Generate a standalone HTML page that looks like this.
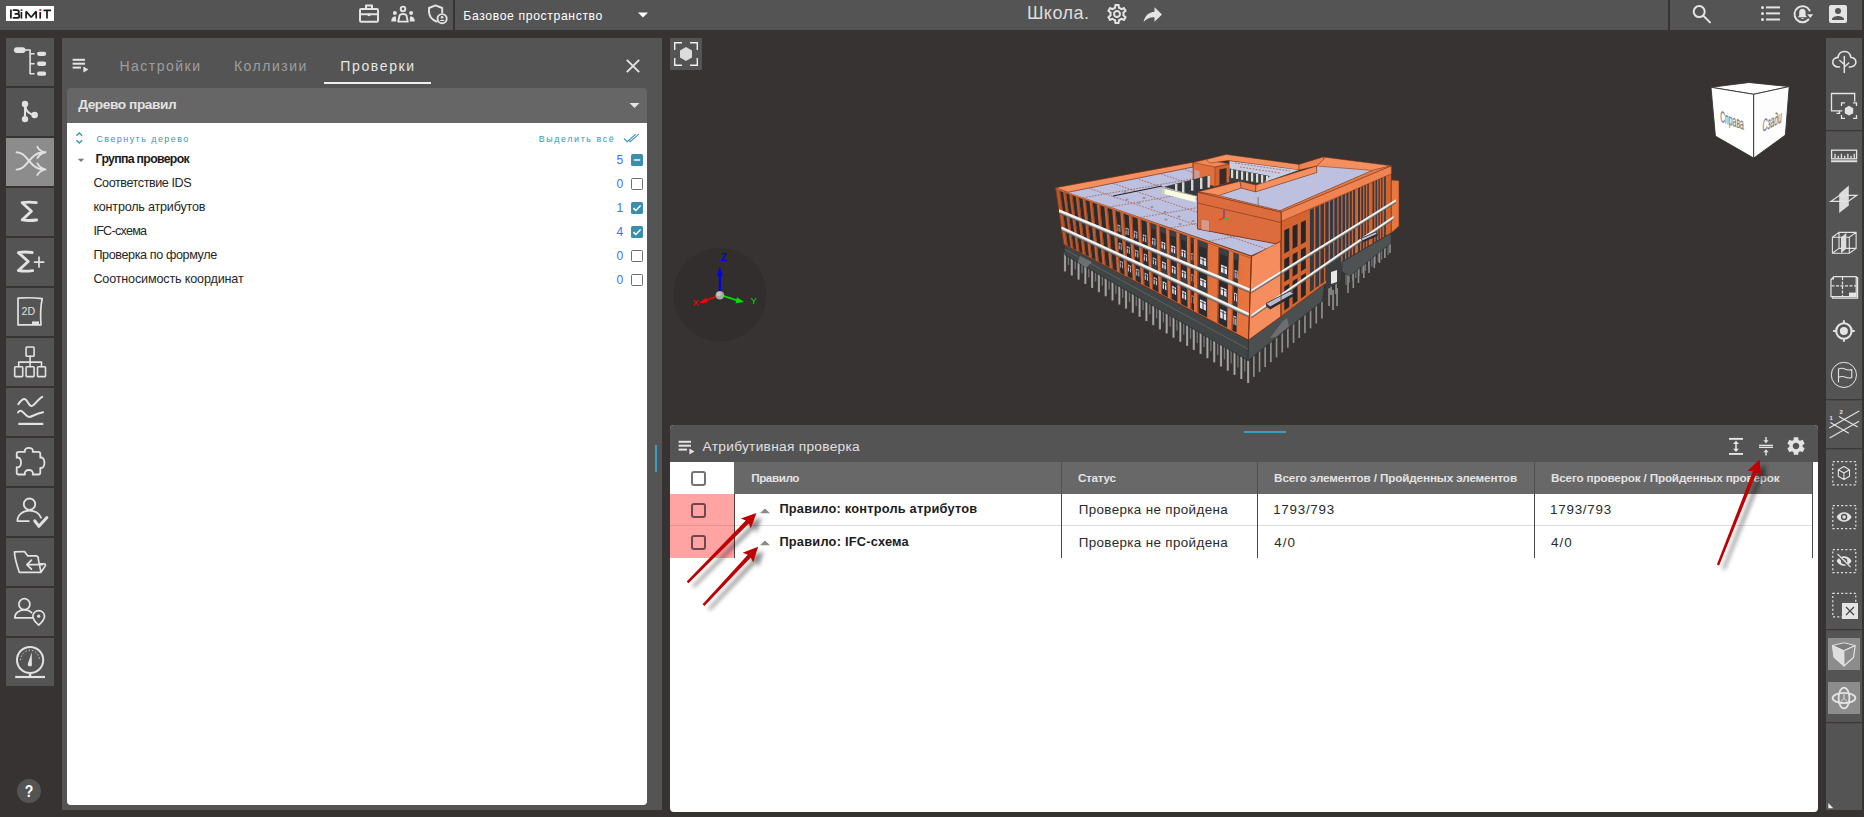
<!DOCTYPE html>
<html lang="ru">
<head>
<meta charset="utf-8">
<title>BIMIT</title>
<style>
*{box-sizing:border-box;margin:0;padding:0}
html,body{width:1864px;height:817px;overflow:hidden;background:#373332;font-family:"Liberation Sans",sans-serif;}
body{position:relative}
.abs{position:absolute}
.t{position:absolute;white-space:nowrap;line-height:1}
#topbar{left:0;top:0;width:1862px;height:30px;background:#545454}
.tdiv{position:absolute;top:0;width:2px;height:30px;background:#373332}
.sb{position:absolute;left:6px;width:48px;height:48px;background:#545454}
.sb.sel{background:#8c8c8c}
.sb svg{position:absolute;left:0;top:0}
#lpanel{left:62px;top:38px;width:600px;height:772px;background:#545454}
#sect{left:67px;top:88px;width:580px;height:35px;background:#666;border-radius:4px 4px 0 0}
#tree{left:67px;top:123px;width:580px;height:682px;background:#fff;border-radius:0 0 4px 4px}
#bpanel{left:670px;top:425px;width:1148px;height:387px;background:#fff;border-radius:4px}
#bhead{left:670px;top:425px;width:1148px;height:37px;background:#545454;border-radius:4px 4px 0 0}
#thead{left:734px;top:462px;width:1078px;height:32px;background:#686868}
#rbar{left:1826px;top:38px;width:36px;height:772px;background:#545454}
</style>
</head>
<body>
<!-- VIEWPORT -->
<svg class="abs" style="left:670px;top:38px" width="1156" height="387" viewBox="670 38 1156 387">
<circle cx="719.8" cy="294.6" r="46.5" fill="#322e2d"/>
<rect x="1063.9" y="252.0" width="2.2" height="19.5" fill="#8d8d8d"/><rect x="1064.7" y="252.0" width="0.7" height="19.0" fill="#b5b5b5"/>
<rect x="1070.7" y="255.9" width="2.2" height="19.7" fill="#8d8d8d"/><rect x="1071.5" y="255.9" width="0.7" height="19.2" fill="#b5b5b5"/>
<rect x="1077.5" y="259.8" width="2.2" height="19.9" fill="#8d8d8d"/><rect x="1078.3" y="259.8" width="0.7" height="19.4" fill="#b5b5b5"/>
<rect x="1084.2" y="263.7" width="2.2" height="20.2" fill="#8d8d8d"/><rect x="1085.0" y="263.7" width="0.7" height="19.7" fill="#b5b5b5"/>
<rect x="1091.0" y="267.6" width="2.2" height="20.4" fill="#8d8d8d"/><rect x="1091.8" y="267.6" width="0.7" height="19.9" fill="#b5b5b5"/>
<rect x="1097.8" y="271.6" width="2.2" height="20.6" fill="#8d8d8d"/><rect x="1098.6" y="271.6" width="0.7" height="20.1" fill="#b5b5b5"/>
<rect x="1104.6" y="275.5" width="2.2" height="20.8" fill="#8d8d8d"/><rect x="1105.4" y="275.5" width="0.7" height="20.3" fill="#b5b5b5"/>
<rect x="1111.4" y="279.4" width="2.2" height="21.1" fill="#8d8d8d"/><rect x="1112.2" y="279.4" width="0.7" height="20.6" fill="#b5b5b5"/>
<rect x="1118.2" y="283.3" width="2.2" height="21.3" fill="#8d8d8d"/><rect x="1119.0" y="283.3" width="0.7" height="20.8" fill="#b5b5b5"/>
<rect x="1124.9" y="287.2" width="2.2" height="21.5" fill="#8d8d8d"/><rect x="1125.7" y="287.2" width="0.7" height="21.0" fill="#b5b5b5"/>
<rect x="1131.7" y="291.1" width="2.2" height="21.7" fill="#8d8d8d"/><rect x="1132.5" y="291.1" width="0.7" height="21.2" fill="#b5b5b5"/>
<rect x="1138.5" y="295.0" width="2.2" height="21.9" fill="#8d8d8d"/><rect x="1139.3" y="295.0" width="0.7" height="21.4" fill="#b5b5b5"/>
<rect x="1145.3" y="298.9" width="2.2" height="22.2" fill="#8d8d8d"/><rect x="1146.1" y="298.9" width="0.7" height="21.7" fill="#b5b5b5"/>
<rect x="1152.1" y="302.8" width="2.2" height="22.4" fill="#8d8d8d"/><rect x="1152.9" y="302.8" width="0.7" height="21.9" fill="#b5b5b5"/>
<rect x="1158.8" y="306.8" width="2.2" height="22.6" fill="#8d8d8d"/><rect x="1159.6" y="306.8" width="0.7" height="22.1" fill="#b5b5b5"/>
<rect x="1165.6" y="310.7" width="2.2" height="22.8" fill="#8d8d8d"/><rect x="1166.4" y="310.7" width="0.7" height="22.3" fill="#b5b5b5"/>
<rect x="1172.4" y="314.6" width="2.2" height="23.1" fill="#8d8d8d"/><rect x="1173.2" y="314.6" width="0.7" height="22.6" fill="#b5b5b5"/>
<rect x="1179.2" y="318.5" width="2.2" height="23.3" fill="#8d8d8d"/><rect x="1180.0" y="318.5" width="0.7" height="22.8" fill="#b5b5b5"/>
<rect x="1186.0" y="322.4" width="2.2" height="23.5" fill="#8d8d8d"/><rect x="1186.8" y="322.4" width="0.7" height="23.0" fill="#b5b5b5"/>
<rect x="1192.7" y="326.3" width="2.2" height="23.7" fill="#8d8d8d"/><rect x="1193.5" y="326.3" width="0.7" height="23.2" fill="#b5b5b5"/>
<rect x="1199.5" y="330.2" width="2.2" height="23.9" fill="#8d8d8d"/><rect x="1200.3" y="330.2" width="0.7" height="23.4" fill="#b5b5b5"/>
<rect x="1206.3" y="334.1" width="2.2" height="24.2" fill="#8d8d8d"/><rect x="1207.1" y="334.1" width="0.7" height="23.7" fill="#b5b5b5"/>
<rect x="1213.1" y="338.0" width="2.2" height="24.4" fill="#8d8d8d"/><rect x="1213.9" y="338.0" width="0.7" height="23.9" fill="#b5b5b5"/>
<rect x="1219.9" y="342.0" width="2.2" height="24.6" fill="#8d8d8d"/><rect x="1220.7" y="342.0" width="0.7" height="24.1" fill="#b5b5b5"/>
<rect x="1226.7" y="345.9" width="2.2" height="24.8" fill="#8d8d8d"/><rect x="1227.5" y="345.9" width="0.7" height="24.3" fill="#b5b5b5"/>
<rect x="1233.4" y="349.8" width="2.2" height="25.1" fill="#8d8d8d"/><rect x="1234.2" y="349.8" width="0.7" height="24.6" fill="#b5b5b5"/>
<rect x="1240.2" y="353.7" width="2.2" height="25.3" fill="#8d8d8d"/><rect x="1241.0" y="353.7" width="0.7" height="24.8" fill="#b5b5b5"/>
<rect x="1247.0" y="357.6" width="2.2" height="25.5" fill="#8d8d8d"/><rect x="1247.8" y="357.6" width="0.7" height="25.0" fill="#b5b5b5"/>
<rect x="1067.8" y="254.0" width="1.3" height="11.1" fill="#777"/>
<rect x="1074.6" y="257.9" width="1.3" height="11.3" fill="#777"/>
<rect x="1081.4" y="261.8" width="1.3" height="11.5" fill="#777"/>
<rect x="1088.1" y="265.7" width="1.3" height="11.6" fill="#777"/>
<rect x="1094.9" y="269.6" width="1.3" height="11.8" fill="#777"/>
<rect x="1101.7" y="273.5" width="1.3" height="12.0" fill="#777"/>
<rect x="1108.5" y="277.4" width="1.3" height="12.2" fill="#777"/>
<rect x="1115.3" y="281.3" width="1.3" height="12.4" fill="#777"/>
<rect x="1122.0" y="285.2" width="1.3" height="12.6" fill="#777"/>
<rect x="1128.8" y="289.2" width="1.3" height="12.8" fill="#777"/>
<rect x="1135.6" y="293.1" width="1.3" height="12.9" fill="#777"/>
<rect x="1142.4" y="297.0" width="1.3" height="13.1" fill="#777"/>
<rect x="1149.2" y="300.9" width="1.3" height="13.3" fill="#777"/>
<rect x="1156.0" y="304.8" width="1.3" height="13.5" fill="#777"/>
<rect x="1162.7" y="308.7" width="1.3" height="13.7" fill="#777"/>
<rect x="1169.5" y="312.6" width="1.3" height="13.9" fill="#777"/>
<rect x="1176.3" y="316.5" width="1.3" height="14.1" fill="#777"/>
<rect x="1183.1" y="320.4" width="1.3" height="14.2" fill="#777"/>
<rect x="1189.9" y="324.4" width="1.3" height="14.4" fill="#777"/>
<rect x="1196.6" y="328.3" width="1.3" height="14.6" fill="#777"/>
<rect x="1203.4" y="332.2" width="1.3" height="14.8" fill="#777"/>
<rect x="1210.2" y="336.1" width="1.3" height="15.0" fill="#777"/>
<rect x="1217.0" y="340.0" width="1.3" height="15.2" fill="#777"/>
<rect x="1223.8" y="343.9" width="1.3" height="15.4" fill="#777"/>
<rect x="1230.5" y="347.8" width="1.3" height="15.5" fill="#777"/>
<rect x="1237.3" y="351.7" width="1.3" height="15.7" fill="#777"/>
<rect x="1244.1" y="355.6" width="1.3" height="15.9" fill="#777"/>
<rect x="1253.0" y="352.4" width="1.7" height="24.4" fill="#8d8d8d"/>
<rect x="1258.7" y="348.1" width="1.7" height="23.8" fill="#8d8d8d"/>
<rect x="1264.3" y="343.9" width="1.7" height="23.2" fill="#8d8d8d"/>
<rect x="1270.0" y="339.7" width="1.7" height="22.5" fill="#8d8d8d"/>
<rect x="1275.7" y="335.4" width="1.7" height="21.9" fill="#8d8d8d"/>
<rect x="1281.4" y="331.2" width="1.7" height="21.3" fill="#8d8d8d"/>
<rect x="1287.0" y="327.0" width="1.7" height="20.7" fill="#8d8d8d"/>
<rect x="1292.7" y="322.8" width="1.7" height="20.1" fill="#8d8d8d"/>
<rect x="1298.4" y="318.5" width="1.7" height="19.5" fill="#8d8d8d"/>
<rect x="1304.1" y="314.3" width="1.7" height="18.8" fill="#8d8d8d"/>
<rect x="1309.7" y="310.1" width="1.7" height="18.2" fill="#8d8d8d"/>
<rect x="1315.4" y="305.8" width="1.7" height="17.6" fill="#8d8d8d"/>
<rect x="1321.1" y="301.6" width="1.7" height="17.0" fill="#8d8d8d"/>
<rect x="1328.2" y="288.0" width="1.7" height="18" fill="#8d8d8d"/>
<rect x="1332.2" y="290.0" width="1.7" height="20" fill="#8d8d8d"/>
<rect x="1336.2" y="288.0" width="1.7" height="18" fill="#8d8d8d"/>
<rect x="1330.2" y="281.0" width="1.7" height="14" fill="#8d8d8d"/>
<rect x="1335.2" y="280.0" width="1.7" height="14" fill="#8d8d8d"/>
<rect x="1345.4" y="271.0" width="1.3" height="14.0" fill="#707070"/>
<rect x="1348.6" y="268.9" width="1.3" height="13.8" fill="#707070"/>
<rect x="1351.9" y="266.8" width="1.3" height="13.5" fill="#707070"/>
<rect x="1355.1" y="264.8" width="1.3" height="13.3" fill="#707070"/>
<rect x="1358.3" y="262.7" width="1.3" height="13.1" fill="#707070"/>
<rect x="1361.6" y="260.6" width="1.3" height="12.8" fill="#707070"/>
<rect x="1364.8" y="258.5" width="1.3" height="12.6" fill="#707070"/>
<rect x="1368.0" y="256.5" width="1.3" height="12.4" fill="#707070"/>
<rect x="1371.2" y="254.4" width="1.3" height="12.2" fill="#707070"/>
<rect x="1374.5" y="252.3" width="1.3" height="11.9" fill="#707070"/>
<rect x="1377.7" y="250.2" width="1.3" height="11.7" fill="#707070"/>
<rect x="1380.9" y="248.2" width="1.3" height="11.5" fill="#707070"/>
<rect x="1384.2" y="246.1" width="1.3" height="11.2" fill="#707070"/>
<rect x="1387.4" y="244.0" width="1.3" height="11.0" fill="#707070"/>
<rect x="1347.2" y="273.0" width="1.6" height="20.0" fill="#8d8d8d"/>
<rect x="1352.5" y="268.9" width="1.6" height="19.1" fill="#8d8d8d"/>
<rect x="1357.7" y="264.8" width="1.6" height="18.2" fill="#8d8d8d"/>
<rect x="1363.0" y="260.6" width="1.6" height="17.4" fill="#8d8d8d"/>
<rect x="1368.2" y="256.5" width="1.6" height="16.5" fill="#8d8d8d"/>
<rect x="1373.5" y="252.4" width="1.6" height="15.6" fill="#8d8d8d"/>
<rect x="1378.7" y="248.2" width="1.6" height="14.8" fill="#8d8d8d"/>
<rect x="1384.0" y="244.1" width="1.6" height="13.9" fill="#8d8d8d"/>
<rect x="1389.2" y="240.0" width="1.6" height="13.0" fill="#8d8d8d"/>
<polygon points="1063.8,244.4 1248.5,340.0 1248.1,360.6 1065.0,255.0" fill="#424546" stroke="#2c2e2f" stroke-width="0.8" stroke-linejoin="round"/>
<line x1="1064.3" y1="249.2" x2="1248.3" y2="349.3" stroke="#6a6d6e" stroke-width="0.7"/>
<polygon points="1248.5,340.0 1325.0,283.8 1322.5,301.0 1275.0,338.8 1248.1,360.6" fill="#4c4f50" stroke="#2c2e2f" stroke-width="0.8" stroke-linejoin="round"/>
<defs><linearGradient id="gf" gradientUnits="userSpaceOnUse" x1="1055" y1="0" x2="1250" y2="0"><stop offset="0" stop-color="#b8552a"/><stop offset="0.45" stop-color="#d96a3a"/><stop offset="1" stop-color="#e8743f"/></linearGradient></defs>
<polygon points="1055.5,187.7 1251.5,256.5 1248.5,340.0 1063.8,244.4" fill="url(#gf)" stroke="#7a3015" stroke-width="0.8" stroke-linejoin="round"/>
<polygon points="1060.0,190.9 1063.0,192.0 1070.5,247.1 1067.7,245.6" fill="#2a2c2e"/>
<polygon points="1058.9,190.5 1060.0,190.9 1067.7,245.6 1066.7,245.1" fill="#9c4520"/>
<polygon points="1066.1,193.1 1069.2,194.2 1076.4,250.1 1073.5,248.6" fill="#2a2c2e"/>
<polygon points="1065.0,192.7 1066.1,193.1 1073.5,248.6 1072.4,248.1" fill="#9c4520"/>
<polygon points="1072.4,195.3 1075.7,196.5 1082.6,253.3 1079.4,251.7" fill="#2a2c2e"/>
<polygon points="1071.3,194.9 1072.4,195.3 1079.4,251.7 1078.4,251.1" fill="#9c4520"/>
<polygon points="1079.0,197.7 1082.5,198.9 1088.9,256.6 1085.6,254.8" fill="#2a2c2e"/>
<polygon points="1077.9,197.3 1079.0,197.7 1085.6,254.8 1084.6,254.3" fill="#9c4520"/>
<polygon points="1085.8,200.1 1089.5,201.4 1095.6,260.0 1092.0,258.1" fill="#2a2c2e"/>
<polygon points="1084.7,199.7 1085.8,200.1 1092.0,258.1 1091.0,257.6" fill="#9c4520"/>
<polygon points="1092.8,202.6 1096.8,204.0 1102.4,263.5 1098.7,261.6" fill="#2a2c2e"/>
<polygon points="1091.7,202.2 1092.8,202.6 1098.7,261.6 1097.7,261.1" fill="#9c4520"/>
<polygon points="1100.1,205.2 1104.3,206.7 1109.6,267.2 1105.6,265.1" fill="#2a2c2e"/>
<polygon points="1099.1,204.8 1100.1,205.2 1105.6,265.1 1104.6,264.6" fill="#9c4520"/>
<polygon points="1107.8,207.9 1112.2,209.5 1117.0,271.0 1112.8,268.9" fill="#2a2c2e"/>
<polygon points="1106.7,207.5 1107.8,207.9 1112.8,268.9 1111.8,268.3" fill="#9c4520"/>
<polygon points="1115.7,210.7 1120.3,212.4 1124.7,275.0 1120.3,272.7" fill="#2a2c2e"/>
<polygon points="1114.6,210.3 1115.7,210.7 1120.3,272.7 1119.3,272.2" fill="#9c4520"/>
<path d="M1117.5 224.3L1120.3 225.5L1120.3 232.0L1117.5 230.9Z" fill="#b9bccd"/>
<rect x="1118.4" y="225.7" width="1" height="6.5" fill="#2a2c2e"/>
<path d="M1117.5 226.5L1120.3 227.7" stroke="#2a2c2e" stroke-width="0.7"/>
<path d="M1118.8 242.5L1121.6 243.8L1121.6 250.3L1118.8 249.1Z" fill="#b9bccd"/>
<rect x="1119.7" y="244.0" width="1" height="6.5" fill="#2a2c2e"/>
<path d="M1118.8 244.7L1121.6 246.0" stroke="#2a2c2e" stroke-width="0.7"/>
<path d="M1120.2 260.8L1122.9 262.1L1122.9 268.6L1120.2 267.3Z" fill="#b9bccd"/>
<rect x="1121.0" y="262.2" width="1" height="6.5" fill="#2a2c2e"/>
<path d="M1120.2 263.0L1122.9 264.3" stroke="#2a2c2e" stroke-width="0.7"/>
<polygon points="1123.9,213.6 1128.8,215.4 1132.7,279.1 1128.0,276.7" fill="#2a2c2e"/>
<polygon points="1122.8,213.2 1123.9,213.6 1128.0,276.7 1127.0,276.2" fill="#9c4520"/>
<path d="M1125.6 227.5L1128.7 228.7L1128.7 235.3L1125.6 234.2Z" fill="#b9bccd"/>
<rect x="1126.6" y="228.9" width="1" height="6.6" fill="#2a2c2e"/>
<path d="M1125.6 229.7L1128.7 230.9" stroke="#2a2c2e" stroke-width="0.7"/>
<path d="M1126.8 246.0L1129.8 247.3L1129.8 254.0L1126.8 252.7Z" fill="#b9bccd"/>
<rect x="1127.8" y="247.5" width="1" height="6.6" fill="#2a2c2e"/>
<path d="M1126.8 248.2L1129.8 249.5" stroke="#2a2c2e" stroke-width="0.7"/>
<path d="M1128.0 264.6L1131.0 266.0L1131.0 272.6L1128.0 271.2Z" fill="#b9bccd"/>
<rect x="1129.0" y="266.1" width="1" height="6.6" fill="#2a2c2e"/>
<path d="M1128.0 266.8L1131.0 268.2" stroke="#2a2c2e" stroke-width="0.7"/>
<polygon points="1132.4,216.7 1137.6,218.5 1141.0,283.4 1136.1,280.8" fill="#2a2c2e"/>
<polygon points="1131.3,216.3 1132.4,216.7 1136.1,280.8 1135.1,280.3" fill="#9c4520"/>
<path d="M1134.1 230.8L1137.3 232.0L1137.3 238.8L1134.1 237.6Z" fill="#b9bccd"/>
<rect x="1135.2" y="232.2" width="1" height="6.8" fill="#2a2c2e"/>
<path d="M1134.1 233.0L1137.3 234.2" stroke="#2a2c2e" stroke-width="0.7"/>
<path d="M1135.2 249.6L1138.3 251.0L1138.3 257.8L1135.2 256.4Z" fill="#b9bccd"/>
<rect x="1136.2" y="251.1" width="1" height="6.8" fill="#2a2c2e"/>
<path d="M1135.2 251.8L1138.3 253.2" stroke="#2a2c2e" stroke-width="0.7"/>
<path d="M1136.2 268.5L1139.3 270.0L1139.3 276.8L1136.2 275.3Z" fill="#b9bccd"/>
<rect x="1137.3" y="270.0" width="1" height="6.8" fill="#2a2c2e"/>
<path d="M1136.2 270.7L1139.3 272.2" stroke="#2a2c2e" stroke-width="0.7"/>
<polygon points="1141.2,219.8 1146.7,221.8 1149.6,287.8 1144.4,285.1" fill="#2a2c2e"/>
<polygon points="1140.1,219.4 1141.2,219.8 1144.4,285.1 1143.4,284.6" fill="#9c4520"/>
<path d="M1142.9 234.2L1146.2 235.5L1146.2 242.4L1142.9 241.1Z" fill="#b9bccd"/>
<rect x="1144.1" y="235.7" width="1" height="6.9" fill="#2a2c2e"/>
<path d="M1142.9 236.4L1146.2 237.7" stroke="#2a2c2e" stroke-width="0.7"/>
<path d="M1143.8 253.4L1147.1 254.8L1147.1 261.7L1143.8 260.3Z" fill="#b9bccd"/>
<rect x="1145.0" y="254.9" width="1" height="6.9" fill="#2a2c2e"/>
<path d="M1143.8 255.6L1147.1 257.0" stroke="#2a2c2e" stroke-width="0.7"/>
<path d="M1144.7 272.6L1148.0 274.2L1148.0 281.1L1144.7 279.5Z" fill="#b9bccd"/>
<rect x="1145.9" y="274.2" width="1" height="6.9" fill="#2a2c2e"/>
<path d="M1144.7 274.8L1148.0 276.4" stroke="#2a2c2e" stroke-width="0.7"/>
<polygon points="1150.4,223.1 1156.2,225.1 1158.6,292.4 1153.1,289.6" fill="#2a2c2e"/>
<polygon points="1149.3,222.7 1150.4,223.1 1153.1,289.6 1152.1,289.1" fill="#9c4520"/>
<path d="M1152.0 237.8L1155.5 239.1L1155.5 246.2L1152.0 244.8Z" fill="#b9bccd"/>
<rect x="1153.3" y="239.2" width="1" height="7.1" fill="#2a2c2e"/>
<path d="M1152.0 240.0L1155.5 241.3" stroke="#2a2c2e" stroke-width="0.7"/>
<path d="M1152.8 257.3L1156.3 258.8L1156.3 265.9L1152.8 264.3Z" fill="#b9bccd"/>
<rect x="1154.0" y="258.9" width="1" height="7.1" fill="#2a2c2e"/>
<path d="M1152.8 259.5L1156.3 261.0" stroke="#2a2c2e" stroke-width="0.7"/>
<path d="M1153.6 276.8L1157.0 278.5L1157.0 285.5L1153.6 283.9Z" fill="#b9bccd"/>
<rect x="1154.8" y="278.5" width="1" height="7.1" fill="#2a2c2e"/>
<path d="M1153.6 279.0L1157.0 280.7" stroke="#2a2c2e" stroke-width="0.7"/>
<polygon points="1159.9,226.5 1166.0,228.6 1167.8,297.2 1162.1,294.2" fill="#2a2c2e"/>
<polygon points="1158.9,226.1 1159.9,226.5 1162.1,294.2 1161.1,293.7" fill="#9c4520"/>
<path d="M1161.5 241.4L1165.2 242.9L1165.2 250.1L1161.5 248.6Z" fill="#e4e5f0"/>
<rect x="1162.8" y="243.0" width="1" height="7.2" fill="#2a2c2e"/>
<path d="M1161.5 243.6L1165.2 245.1" stroke="#2a2c2e" stroke-width="0.7"/>
<path d="M1162.1 261.3L1165.8 262.9L1165.8 270.1L1162.1 268.5Z" fill="#e4e5f0"/>
<rect x="1163.4" y="262.9" width="1" height="7.2" fill="#2a2c2e"/>
<path d="M1162.1 263.5L1165.8 265.1" stroke="#2a2c2e" stroke-width="0.7"/>
<path d="M1162.7 281.3L1166.3 283.0L1166.3 290.2L1162.7 288.5Z" fill="#e4e5f0"/>
<rect x="1164.0" y="282.9" width="1" height="7.2" fill="#2a2c2e"/>
<path d="M1162.7 283.5L1166.3 285.2" stroke="#2a2c2e" stroke-width="0.7"/>
<polygon points="1169.8,230.0 1176.2,232.3 1177.5,302.2 1171.5,299.1" fill="#2a2c2e"/>
<polygon points="1168.8,229.6 1169.8,230.0 1171.5,299.1 1170.4,298.5" fill="#9c4520"/>
<path d="M1171.3 245.3L1175.2 246.8L1175.2 254.1L1171.3 252.6Z" fill="#e4e5f0"/>
<rect x="1172.8" y="246.8" width="1" height="7.3" fill="#2a2c2e"/>
<path d="M1171.3 247.5L1175.2 249.0" stroke="#2a2c2e" stroke-width="0.7"/>
<path d="M1171.8 265.5L1175.6 267.2L1175.6 274.6L1171.8 272.9Z" fill="#e4e5f0"/>
<rect x="1173.2" y="267.2" width="1" height="7.3" fill="#2a2c2e"/>
<path d="M1171.8 267.7L1175.6 269.4" stroke="#2a2c2e" stroke-width="0.7"/>
<path d="M1172.2 285.8L1176.0 287.7L1176.0 295.0L1172.2 293.2Z" fill="#e4e5f0"/>
<rect x="1173.6" y="287.6" width="1" height="7.3" fill="#2a2c2e"/>
<path d="M1172.2 288.0L1176.0 289.9" stroke="#2a2c2e" stroke-width="0.7"/>
<polygon points="1180.1,233.6 1186.8,236.0 1187.5,307.3 1181.2,304.1" fill="#2a2c2e"/>
<polygon points="1179.0,233.3 1180.1,233.6 1181.2,304.1 1180.2,303.5" fill="#9c4520"/>
<path d="M1181.5 249.2L1185.6 250.8L1185.6 258.3L1181.5 256.7Z" fill="#e4e5f0"/>
<rect x="1183.1" y="250.8" width="1" height="7.5" fill="#2a2c2e"/>
<path d="M1181.5 251.4L1185.6 253.0" stroke="#2a2c2e" stroke-width="0.7"/>
<path d="M1181.8 269.9L1185.9 271.7L1185.9 279.2L1181.8 277.4Z" fill="#e4e5f0"/>
<rect x="1183.3" y="271.6" width="1" height="7.5" fill="#2a2c2e"/>
<path d="M1181.8 272.1L1185.9 273.9" stroke="#2a2c2e" stroke-width="0.7"/>
<path d="M1182.1 290.6L1186.1 292.5L1186.1 300.0L1182.1 298.1Z" fill="#e4e5f0"/>
<rect x="1183.6" y="292.4" width="1" height="7.5" fill="#2a2c2e"/>
<path d="M1182.1 292.8L1186.1 294.7" stroke="#2a2c2e" stroke-width="0.7"/>
<polygon points="1190.8,237.4 1193.7,238.5 1194.0,310.7 1191.3,309.2" fill="#2a2c2e"/>
<polygon points="1189.7,237.1 1190.8,237.4 1191.3,309.2 1190.2,308.7" fill="#9c4520"/>
<path d="M1191.4 253.1L1193.2 253.7L1193.2 261.4L1191.4 260.7Z" fill="#e4e5f0"/>
<rect x="1191.8" y="254.2" width="1" height="7.7" fill="#2a2c2e"/>
<path d="M1191.4 255.3L1193.2 255.9" stroke="#2a2c2e" stroke-width="0.7"/>
<path d="M1191.5 274.1L1193.3 274.9L1193.3 282.6L1191.5 281.8Z" fill="#e4e5f0"/>
<rect x="1191.9" y="275.3" width="1" height="7.7" fill="#2a2c2e"/>
<path d="M1191.5 276.3L1193.3 277.1" stroke="#2a2c2e" stroke-width="0.7"/>
<path d="M1191.7 295.2L1193.4 296.0L1193.4 303.7L1191.7 302.9Z" fill="#e4e5f0"/>
<rect x="1192.0" y="296.4" width="1" height="7.7" fill="#2a2c2e"/>
<path d="M1191.7 297.4L1193.4 298.2" stroke="#2a2c2e" stroke-width="0.7"/>
<polygon points="1198.2,240.1 1207.6,243.4 1207.1,317.4 1198.3,312.9" fill="#2a2c2e"/>
<polygon points="1197.1,239.7 1198.2,240.1 1198.3,312.9 1197.2,312.3" fill="#9c4520"/>
<path d="M1200.1 256.4L1206.1 258.8L1206.1 267.6L1200.1 265.2Z" fill="#e4e5f0"/>
<rect x="1202.6" y="258.4" width="1" height="8.8" fill="#2a2c2e"/>
<path d="M1200.1 258.6L1206.1 261.0" stroke="#2a2c2e" stroke-width="0.7"/>
<path d="M1200.1 277.8L1206.0 280.4L1206.0 289.2L1200.1 286.6Z" fill="#e4e5f0"/>
<rect x="1202.5" y="279.9" width="1" height="8.8" fill="#2a2c2e"/>
<path d="M1200.1 280.0L1206.0 282.6" stroke="#2a2c2e" stroke-width="0.7"/>
<path d="M1200.0 299.2L1205.9 302.0L1205.9 310.8L1200.0 308.0Z" fill="#e4e5f0"/>
<rect x="1202.5" y="301.4" width="1" height="8.8" fill="#2a2c2e"/>
<path d="M1200.0 301.4L1205.9 304.2" stroke="#2a2c2e" stroke-width="0.7"/>
<polygon points="1219.3,247.6 1228.7,250.9 1227.1,327.7 1218.2,323.1" fill="#2a2c2e"/>
<polygon points="1218.2,247.2 1219.3,247.6 1218.2,323.1 1217.2,322.6" fill="#9c4520"/>
<path d="M1220.9 264.5L1227.0 266.9L1227.0 275.7L1220.9 273.3Z" fill="#e4e5f0"/>
<rect x="1223.5" y="266.5" width="1" height="8.8" fill="#2a2c2e"/>
<path d="M1220.9 266.7L1227.0 269.1" stroke="#2a2c2e" stroke-width="0.7"/>
<path d="M1220.6 286.7L1226.5 289.3L1226.5 298.1L1220.6 295.5Z" fill="#e4e5f0"/>
<rect x="1223.1" y="288.8" width="1" height="8.8" fill="#2a2c2e"/>
<path d="M1220.6 288.9L1226.5 291.5" stroke="#2a2c2e" stroke-width="0.7"/>
<path d="M1220.2 309.0L1226.1 311.8L1226.1 320.6L1220.2 317.8Z" fill="#e4e5f0"/>
<rect x="1222.7" y="311.2" width="1" height="8.8" fill="#2a2c2e"/>
<path d="M1220.2 311.2L1226.1 314.0" stroke="#2a2c2e" stroke-width="0.7"/>
<polygon points="1234.2,252.9 1238.7,254.5 1236.5,332.6 1232.3,330.4" fill="#2a2c2e"/>
<polygon points="1233.1,252.5 1234.2,252.9 1232.3,330.4 1231.3,329.8" fill="#9c4520"/>
<path d="M1234.7 269.9L1237.6 271.0L1237.6 279.8L1234.7 278.7Z" fill="#e4e5f0"/>
<rect x="1235.6" y="271.2" width="1" height="8.8" fill="#2a2c2e"/>
<path d="M1234.7 272.1L1237.6 273.2" stroke="#2a2c2e" stroke-width="0.7"/>
<path d="M1234.1 292.6L1236.9 293.8L1236.9 302.6L1234.1 301.4Z" fill="#e4e5f0"/>
<rect x="1235.0" y="294.0" width="1" height="8.8" fill="#2a2c2e"/>
<path d="M1234.1 294.8L1236.9 296.0" stroke="#2a2c2e" stroke-width="0.7"/>
<path d="M1233.5 315.4L1236.3 316.7L1236.3 325.5L1233.5 324.2Z" fill="#e4e5f0"/>
<rect x="1234.4" y="316.8" width="1" height="8.8" fill="#2a2c2e"/>
<path d="M1233.5 317.6L1236.3 318.9" stroke="#2a2c2e" stroke-width="0.7"/>
<polygon points="1150.4,223.1 1156.2,225.1 1156.4,230.4 1150.6,228.3" fill="#3b3f41"/>
<polygon points="1159.9,226.5 1166.0,228.6 1166.1,234.0 1160.1,231.8" fill="#3b3f41"/>
<polygon points="1169.8,230.0 1176.2,232.3 1176.3,237.7 1170.0,235.4" fill="#3b3f41"/>
<polygon points="1180.1,233.6 1186.8,236.0 1186.9,241.6 1180.2,239.2" fill="#3b3f41"/>
<polygon points="1190.8,237.4 1193.7,238.5 1193.7,244.1 1190.8,243.1" fill="#3b3f41"/>
<polygon points="1198.2,240.1 1207.6,243.4 1207.5,249.2 1198.2,245.8" fill="#3b3f41"/>
<polygon points="1219.3,247.6 1228.7,250.9 1228.6,257.0 1219.2,253.5" fill="#3b3f41"/>
<polygon points="1234.2,252.9 1238.7,254.5 1238.5,260.6 1234.0,259.0" fill="#3b3f41"/>
<polygon points="1151.2,244.0 1156.9,246.3 1157.1,251.5 1151.5,249.2" fill="#3b3f41"/>
<polygon points="1160.6,247.8 1166.6,250.2 1166.7,255.5 1160.8,253.1" fill="#3b3f41"/>
<polygon points="1170.3,251.7 1176.6,254.2 1176.7,259.7 1170.5,257.1" fill="#3b3f41"/>
<polygon points="1180.4,255.8 1187.0,258.4 1187.1,264.0 1180.5,261.3" fill="#3b3f41"/>
<polygon points="1190.9,260.0 1193.8,261.2 1193.8,266.8 1191.0,265.6" fill="#3b3f41"/>
<polygon points="1198.2,262.9 1207.4,266.7 1207.4,272.5 1198.2,268.7" fill="#3b3f41"/>
<polygon points="1219.0,271.3 1228.2,275.0 1228.1,281.1 1218.9,277.3" fill="#3b3f41"/>
<polygon points="1233.6,277.2 1238.0,279.0 1237.8,285.1 1233.4,283.3" fill="#3b3f41"/>
<polygon points="1152.0,263.5 1157.6,266.0 1157.8,271.3 1152.3,268.7" fill="#3b3f41"/>
<polygon points="1161.3,267.6 1167.1,270.3 1167.3,275.7 1161.4,272.9" fill="#3b3f41"/>
<polygon points="1170.8,271.9 1177.0,274.7 1177.1,280.2 1170.9,277.4" fill="#3b3f41"/>
<polygon points="1180.8,276.4 1187.2,279.3 1187.3,284.9 1180.8,281.9" fill="#3b3f41"/>
<polygon points="1191.1,281.0 1193.9,282.3 1193.9,288.0 1191.1,286.7" fill="#3b3f41"/>
<polygon points="1198.2,284.3 1207.3,288.4 1207.3,294.2 1198.2,290.0" fill="#3b3f41"/>
<polygon points="1218.7,293.5 1227.7,297.6 1227.6,303.6 1218.6,299.4" fill="#3b3f41"/>
<polygon points="1233.0,299.9 1237.4,301.9 1237.2,308.0 1232.9,306.0" fill="#3b3f41"/>
<polygon points="1059.0,209.2 1251.3,289.1 1251.3,292.9 1059.0,213.1" fill="#9a9a9a"/><polygon points="1059.0,209.2 1251.3,289.1 1251.3,291.5 1059.0,211.7" fill="#f4f4f4"/><line x1="1059.0" y1="213.4" x2="1251.3" y2="293.2" stroke="#555" stroke-width="0.8"/>
<polygon points="1061.5,226.4 1251.3,314.1 1251.3,317.9 1061.5,230.2" fill="#9a9a9a"/><polygon points="1061.5,226.4 1251.3,314.1 1251.3,316.5 1061.5,228.8" fill="#f4f4f4"/><line x1="1061.5" y1="230.6" x2="1251.3" y2="318.2" stroke="#555" stroke-width="0.8"/>
<polygon points="1055.5,187.7 1251.5,256.5 1251.3,258.2 1055.8,189.4" fill="#e9804d" stroke="#7a3015" stroke-width="0.5" stroke-linejoin="round"/>
<polygon points="1251.5,256.5 1276.0,243.5 1281.0,241.0 1281.0,316.5 1248.5,340.0" fill="#f58d5f" stroke="#7a3015" stroke-width="0.7" stroke-linejoin="round"/>
<polygon points="1281.0,212.0 1391.3,165.8 1391.3,233.0 1342.0,262.0 1341.0,272.0 1326.0,284.0 1325.0,283.8 1281.0,316.5" fill="#d4642f" stroke="#7a3015" stroke-width="0.7" stroke-linejoin="round"/>
<polygon points="1284.3,230.3 1289.3,227.9 1289.3,306.9 1284.3,310.5" fill="#23262a"/>
<polygon points="1292.6,226.3 1297.5,223.9 1297.5,300.9 1292.6,304.5" fill="#23262a"/>
<polygon points="1300.9,222.4 1305.8,220.0 1305.8,295.0 1300.9,298.6" fill="#23262a"/>
<polygon points="1309.9,209.9 1313.9,208.1 1313.9,289.2 1309.9,292.1" fill="#343a44"/>
<polygon points="1315.4,207.4 1319.1,205.8 1319.1,285.5 1315.4,288.1" fill="#343a44"/>
<polygon points="1320.5,205.1 1324.0,203.5 1324.0,281.9 1320.5,284.5" fill="#343a44"/>
<polygon points="1325.3,203.0 1328.6,201.5 1328.6,278.6 1325.3,281.0" fill="#343a44"/>
<polygon points="1330.0,200.9 1333.1,199.5 1333.1,275.4 1330.0,277.6" fill="#343a44"/>
<polygon points="1334.4,198.9 1337.3,197.6 1337.3,272.4 1334.4,274.5" fill="#343a44"/>
<polygon points="1338.6,197.0 1341.2,195.8 1341.2,269.5 1338.6,271.4" fill="#343a44"/>
<polygon points="1342.5,195.2 1345.0,194.1 1345.0,266.8 1342.5,268.6" fill="#343a44"/>
<polygon points="1346.3,193.5 1348.5,192.5 1348.5,264.3 1346.3,265.9" fill="#343a44"/>
<polygon points="1349.8,191.9 1351.8,191.0 1351.8,261.9 1349.8,263.4" fill="#343a44"/>
<polygon points="1353.1,190.4 1355.1,189.5 1355.1,259.6 1353.1,261.0" fill="#343a44"/>
<polygon points="1358.0,188.2 1360.0,187.3 1360.0,256.1 1358.0,257.5" fill="#343a44"/>
<polygon points="1361.3,186.7 1363.1,185.9 1363.1,253.8 1361.3,255.1" fill="#343a44"/>
<polygon points="1364.4,185.3 1365.9,184.6 1365.9,251.8 1364.4,252.9" fill="#343a44"/>
<polygon points="1367.3,184.0 1368.8,183.3 1368.8,249.7 1367.3,250.8" fill="#343a44"/>
<polygon points="1372.5,181.6 1374.2,180.9 1374.2,245.8 1372.5,247.0" fill="#343a44"/>
<polygon points="1375.5,180.3 1377.1,179.6 1377.1,243.8 1375.5,244.9" fill="#343a44"/>
<polygon points="1378.4,179.0 1379.8,178.4 1379.8,241.8 1378.4,242.8" fill="#343a44"/>
<polygon points="1381.2,177.8 1382.5,177.2 1382.5,239.9 1381.2,240.8" fill="#343a44"/>
<polygon points="1384.1,176.4 1385.8,175.7 1385.8,237.5 1384.1,238.7" fill="#343a44"/>
<polygon points="1283.9,253.8 1289.7,250.6 1289.7,256.2 1283.9,259.5" fill="#d4642f"/>
<polygon points="1283.9,282.3 1289.7,278.6 1289.7,283.2 1283.9,287.0" fill="#d4642f"/>
<polygon points="1292.1,249.3 1298.0,246.1 1298.0,251.5 1292.1,254.8" fill="#d4642f"/>
<polygon points="1292.1,277.0 1298.0,273.3 1298.0,277.8 1292.1,281.6" fill="#d4642f"/>
<polygon points="1300.4,244.7 1306.3,241.5 1306.3,246.8 1300.4,250.1" fill="#d4642f"/>
<polygon points="1300.4,271.8 1306.3,268.1 1306.3,272.5 1300.4,276.2" fill="#d4642f"/>
<polygon points="1281.0,212.0 1391.3,165.8 1391.3,173.8 1281.0,221.5" fill="#ef8452" stroke="#7a3015" stroke-width="0.5" stroke-linejoin="round"/>
<polygon points="1326.0,262.0 1341.0,255.0 1341.0,281.0 1326.0,290.0" fill="#3a3c3e"/>
<polygon points="1331.0,272.0 1337.0,270.0 1337.0,282.0 1331.0,284.0" fill="#e8e8e8"/>
<polygon points="1342.0,262.0 1391.3,233.0 1391.0,243.0 1350.0,276.0 1342.0,272.0" fill="#4f5253" stroke="#2c2e2f" stroke-width="0.6" stroke-linejoin="round"/>
<polygon points="1391.3,180.0 1399.0,180.6 1399.0,226.0 1391.3,233.0" fill="#e8763f" stroke="#7a3015" stroke-width="0.6" stroke-linejoin="round"/>
<polygon points="1251.3,289.4 1396.0,199.2 1396.0,202.5 1251.3,292.6" fill="#9a9a9a"/><polygon points="1251.3,289.4 1396.0,199.2 1396.0,201.2 1251.3,291.4" fill="#f4f4f4"/><line x1="1251.3" y1="292.9" x2="1396.0" y2="202.8" stroke="#555" stroke-width="0.8"/>
<polygon points="1251.3,314.4 1393.4,215.9 1393.4,219.2 1251.3,317.6" fill="#9a9a9a"/><polygon points="1251.3,314.4 1393.4,215.9 1393.4,218.0 1251.3,316.4" fill="#f4f4f4"/><line x1="1251.3" y1="317.9" x2="1393.4" y2="219.6" stroke="#555" stroke-width="0.8"/>
<polygon points="1266.0,303.5 1290.0,291.0 1294.0,293.5 1270.0,307.0" fill="#b8bad2" stroke="#222" stroke-width="0.8" stroke-linejoin="round"/>
<polygon points="1266.0,303.5 1270.0,307.0 1270.0,309.5 1266.0,306.0" fill="#333"/>
<polygon points="1270.0,307.0 1294.0,293.5 1294.0,296.0 1270.0,309.5" fill="#2b2b2b"/>
<polygon points="1360.8,238.5 1375.5,232.0 1377.5,234.0 1362.8,240.8" fill="#b8bad2" stroke="#222" stroke-width="0.8" stroke-linejoin="round"/>
<polygon points="1362.8,240.8 1377.5,234.0 1377.5,235.8 1362.8,242.6" fill="#2b2b2b"/>
<polygon points="1282.0,322.0 1287.0,318.0 1289.0,326.0 1276.0,337.0 1270.0,338.0" fill="#6d6e72"/>
<polygon points="1080.0,256.0 1092.0,262.0 1086.0,268.0 1078.0,262.0" fill="#6d6e72"/>
<line x1="1251.5" y1="256.5" x2="1248.5" y2="340.0" stroke="#7a3015" stroke-width="0.9"/>
<line x1="1281.0" y1="212.0" x2="1281.0" y2="316.5" stroke="#7a3015" stroke-width="0.8"/>
<polygon points="1057.0,188.5 1193.0,163.5 1197.5,192.0 1197.5,229.0 1276.0,243.8 1251.3,255.4" fill="#bdc0df"/>
<polygon points="1055.5,187.7 1193.1,162.2 1193.1,167.0 1068.0,192.3" fill="#f58f60" stroke="#7a3015" stroke-width="0.7" stroke-linejoin="round"/>
<clipPath id="rc"><polygon points="1068,192.3 1193,167 1197.5,192 1197.5,229 1276,243.8 1251.3,255.4"/></clipPath>
<g clip-path="url(#rc)"><line x1="1083.0" y1="197.8" x2="1229.3" y2="172.5" stroke="#9c4f3a" stroke-width="0.9" stroke-dasharray="1.6 1.4" opacity="0.8"/><line x1="1109.7" y1="207.0" x2="1256.0" y2="181.7" stroke="#9c4f3a" stroke-width="0.9" stroke-dasharray="1.6 1.4" opacity="0.8"/><line x1="1140.3" y1="217.5" x2="1286.6" y2="192.2" stroke="#9c4f3a" stroke-width="0.9" stroke-dasharray="1.6 1.4" opacity="0.8"/><line x1="1171.0" y1="227.9" x2="1317.3" y2="202.6" stroke="#9c4f3a" stroke-width="0.9" stroke-dasharray="1.6 1.4" opacity="0.8"/><line x1="1209.2" y1="241.0" x2="1355.5" y2="215.7" stroke="#9c4f3a" stroke-width="0.9" stroke-dasharray="1.6 1.4" opacity="0.8"/><line x1="1082.6" y1="186.1" x2="1273.9" y2="251.5" stroke="#9c4f3a" stroke-width="0.9" stroke-dasharray="1.6 1.4" opacity="0.8"/><line x1="1107.9" y1="181.7" x2="1299.2" y2="247.1" stroke="#9c4f3a" stroke-width="0.9" stroke-dasharray="1.6 1.4" opacity="0.8"/><line x1="1133.2" y1="177.3" x2="1324.5" y2="242.8" stroke="#9c4f3a" stroke-width="0.9" stroke-dasharray="1.6 1.4" opacity="0.8"/><line x1="1158.4" y1="173.0" x2="1349.7" y2="238.4" stroke="#9c4f3a" stroke-width="0.9" stroke-dasharray="1.6 1.4" opacity="0.8"/><line x1="1182.4" y1="168.8" x2="1373.7" y2="234.2" stroke="#9c4f3a" stroke-width="0.9" stroke-dasharray="1.6 1.4" opacity="0.8"/></g>
<line x1="1113.0" y1="196.0" x2="1162.0" y2="186.0" stroke="#222" stroke-width="1.2"/>
<ellipse cx="1127" cy="199.5" rx="1.6" ry="0.9" fill="#8f9398"/>
<ellipse cx="1139" cy="203" rx="1.6" ry="0.9" fill="#8f9398"/>
<ellipse cx="1152" cy="207" rx="1.6" ry="0.9" fill="#8f9398"/>
<ellipse cx="1165" cy="212" rx="1.6" ry="0.9" fill="#8f9398"/>
<ellipse cx="1179" cy="216.5" rx="1.6" ry="0.9" fill="#8f9398"/>
<ellipse cx="1193" cy="221" rx="1.6" ry="0.9" fill="#8f9398"/>
<ellipse cx="1180" cy="224" rx="1.6" ry="0.9" fill="#8f9398"/>
<ellipse cx="1166" cy="219.5" rx="1.6" ry="0.9" fill="#8f9398"/>
<ellipse cx="1144" cy="198" rx="1.6" ry="0.9" fill="#8f9398"/>
<ellipse cx="1125" cy="192" rx="1.6" ry="0.9" fill="#8f9398"/>
<polygon points="1193.1,162.5 1206.0,159.5 1229.5,164.0 1229.5,182.0 1215.0,186.5 1193.1,181.0" fill="#e0703d" stroke="#7a3015" stroke-width="0.7" stroke-linejoin="round"/>
<polygon points="1206.0,159.5 1229.5,164.0 1215.0,167.0 1193.1,162.5" fill="#f0895a" stroke="#7a3015" stroke-width="0.5" stroke-linejoin="round"/>
<polygon points="1215.0,167.0 1229.5,164.0 1229.5,182.0 1215.0,186.5" fill="#d2622f" stroke="#7a3015" stroke-width="0.5" stroke-linejoin="round"/>
<polygon points="1219.5,169.5 1226.5,168.0 1226.5,183.0 1219.5,185.0" fill="#3a2a28"/>
<polygon points="1194.5,170.0 1199.5,171.0 1199.5,181.0 1194.5,180.0" fill="#c7a097"/>
<polygon points="1164.0,186.8 1209.6,175.2 1209.6,190.0 1196.0,196.0" fill="#353a40"/>
<rect x="1175" y="184.0" width="2.4" height="10.1" fill="#d9d9d4"/>
<rect x="1182" y="182.2" width="2.4" height="10.4" fill="#d9d9d4"/>
<rect x="1191" y="179.9" width="2.4" height="10.8" fill="#d9d9d4"/>
<rect x="1200" y="177.7" width="2.4" height="11.3" fill="#d9d9d4"/>
<rect x="1207.5" y="175.8" width="2.4" height="11.7" fill="#d9d9d4"/>
<polygon points="1162.5,187.9 1195.6,196.0 1195.6,202.3 1162.5,193.5" fill="#fbfbe2"/>
<line x1="1162.5" y1="187.9" x2="1195.6" y2="196.0" stroke="#9a9a88" stroke-width="0.8"/>
<polygon points="1162.5,187.9 1164.5,187.2 1164.5,193.9 1162.5,193.5" fill="#c9c9b0"/>
<polygon points="1206.0,159.5 1226.3,154.4 1299.0,164.4 1299.0,170.0 1228.0,160.5 1210.0,163.0" fill="#f4905f" stroke="#7a3015" stroke-width="0.5" stroke-linejoin="round"/>
<polygon points="1229.5,161.0 1299.0,170.0 1262.0,183.0 1229.5,176.0" fill="#c9cbe2"/>
<polygon points="1229.5,168.5 1270.0,176.0 1262.0,184.5 1240.0,181.0 1229.5,181.5" fill="#3c4145"/>
<rect x="1231" y="169.5" width="2.2" height="8.5" fill="#dcdccf"/>
<rect x="1236" y="170.4" width="2.2" height="8.5" fill="#dcdccf"/>
<rect x="1241" y="171.3" width="2.2" height="8.5" fill="#dcdccf"/>
<rect x="1246" y="172.2" width="2.2" height="8.5" fill="#dcdccf"/>
<rect x="1251" y="173.1" width="2.2" height="8.5" fill="#dcdccf"/>
<rect x="1256" y="174.0" width="2.2" height="8.5" fill="#dcdccf"/>
<rect x="1261" y="174.9" width="2.2" height="8.5" fill="#dcdccf"/>
<rect x="1266" y="175.8" width="2.2" height="8.5" fill="#dcdccf"/>
<line x1="1235.0" y1="163.0" x2="1290.0" y2="171.0" stroke="#9c4f3a" stroke-width="0.9" stroke-dasharray="1.6 1.6" opacity="0.85"/>
<line x1="1240.0" y1="167.0" x2="1280.0" y2="173.0" stroke="#9c4f3a" stroke-width="0.9" stroke-dasharray="1.6 1.6" opacity="0.85"/>
<polygon points="1197.5,192.0 1281.0,212.0 1281.0,241.0 1276.0,243.8 1197.5,229.0" fill="#dc6c3e" stroke="#7a3015" stroke-width="0.8" stroke-linejoin="round"/>
<line x1="1197.5" y1="203.0" x2="1281.0" y2="222.5" stroke="#7a3015" stroke-width="0.6"/>
<polygon points="1201.0,219.0 1209.5,220.5 1209.5,231.2 1201.0,229.6" fill="#d9998a" stroke="#8a5a4a" stroke-width="0.5" stroke-linejoin="round"/>
<polygon points="1218.8,195.6 1241.3,188.1 1255.6,191.9 1316.9,172.5 1316.9,165.6 1373.1,170.0 1280.0,210.6" fill="#bdc0df"/>
<polygon points="1197.5,192.0 1240.0,181.3 1241.3,188.1 1218.8,195.6 1205.0,193.0" fill="#f4905f" stroke="#7a3015" stroke-width="0.5" stroke-linejoin="round"/>
<polygon points="1240.0,181.3 1256.0,185.0 1255.6,191.9 1241.3,188.1" fill="#e9804d" stroke="#7a3015" stroke-width="0.5" stroke-linejoin="round"/>
<polygon points="1256.0,185.0 1316.5,166.0 1316.9,172.5 1255.6,191.9" fill="#f4905f" stroke="#7a3015" stroke-width="0.5" stroke-linejoin="round"/>
<polygon points="1299.0,164.4 1323.0,157.0 1324.5,159.5 1316.9,166.0 1316.5,166.0 1299.0,170.0" fill="#ef8452" stroke="#7a3015" stroke-width="0.5" stroke-linejoin="round"/>
<polygon points="1323.0,157.0 1391.3,165.8 1373.1,170.5 1316.9,166.0 1324.5,158.5" fill="#f4905f" stroke="#7a3015" stroke-width="0.5" stroke-linejoin="round"/>
<polygon points="1197.5,192.0 1281.0,212.0 1280.0,210.6 1218.8,195.6 1205.0,193.0" fill="#e9804d" stroke="#7a3015" stroke-width="0.4" stroke-linejoin="round"/>
<polygon points="1281.0,212.0 1391.3,165.8 1373.1,170.0 1280.0,210.6" fill="#e07a48" stroke="#7a3015" stroke-width="0.4" stroke-linejoin="round"/>
<rect x="1257.5" y="197" width="1.4" height="8" fill="#8a8d8f"/>
<line x1="1224.0" y1="218.0" x2="1224.0" y2="210.0" stroke="#3a22d0" stroke-width="0.9"/>
<line x1="1224.0" y1="218.0" x2="1219.0" y2="220.0" stroke="#f01010" stroke-width="0.9"/>
<line x1="1224.0" y1="218.0" x2="1230.0" y2="219.5" stroke="#10d010" stroke-width="1.2"/>
<rect x="670" y="38" width="32" height="32" fill="#545454"/>
<path d="M674.7 50V42.7H682M690 42.7H697.3V50M697.3 58V65.3H690M682 65.3H674.7V58" stroke="#f0f0f0" stroke-width="1.4" fill="none"/>
<path d="M686 47.1L692 50.6V57.4L686 60.9L680 57.400V50.600Z" fill="#dcdcdc"/>
<line x1="719.9" y1="291" x2="719.9" y2="274" stroke="#0000f0" stroke-width="2.100"/><path d="M719.900 266.800L722.900 276H716.900Z" fill="#0000f0"/>
<line x1="716.500" y1="296.200" x2="704.500" y2="301.100" stroke="#f00000" stroke-width="1.700"/><path d="M698.600 303.300L706.300 297.700L707.500 302.400Z" fill="#ff0000"/>
<line x1="723.900" y1="296.200" x2="737" y2="300.400" stroke="#00e000" stroke-width="1.900"/><path d="M744.200 302L735.500 303.300L737 297.200Z" fill="#00e000"/>
<circle cx="719.900" cy="295.200" r="4.300" fill="#a8a8a8"/><circle cx="718.800" cy="294" r="2.200" fill="#c4c4c4"/>
<text x="720.400" y="260.900" font-family="Liberation Sans" font-size="10.500" font-weight="700" fill="#0000f0">Z</text>
<text x="692.300" y="305.500" font-family="Liberation Sans" font-size="9.800" fill="#ff0000">X</text>
<text x="750.500" y="304" font-family="Liberation Sans" font-size="9.800" fill="#00dd00">Y</text>
<polygon points="1711.0,87.3 1749.0,82.5 1789.2,86.6 1753.7,94.3" fill="#ffffff" stroke="#333" stroke-width="0.9" stroke-linejoin="round"/>
<polygon points="1711.0,87.3 1753.7,94.3 1753.7,158.1 1715.4,136.1" fill="#ffffff" stroke="#333" stroke-width="0.9" stroke-linejoin="round"/>
<polygon points="1753.7,94.3 1789.2,86.6 1785.4,135.0 1753.7,158.1" fill="#fdfdfd" stroke="#333" stroke-width="0.9" stroke-linejoin="round"/>
<text transform="matrix(0.44,0.155,0,1,1720.200,121.500)" font-family="Liberation Sans" font-size="15.500" fill="#7a7a7a" stroke="#7a7a7a" stroke-width="0.3">Справа</text>
<text transform="matrix(0.40,-0.205,0,1,1762.600,132)" font-family="Liberation Sans" font-style="italic" font-size="17" fill="#7a7a7a" stroke="#7a7a7a" stroke-width="0.3">Сзади</text>
</svg>
<!-- TOP BAR -->
<div id="topbar" class="abs"></div>
<div class="tdiv" style="left:453px"></div>
<div class="tdiv" style="left:1668px"></div>
<div class="abs" style="left:6px;top:6px;width:48px;height:15px;background:#fff"></div>
<svg class="abs" style="left:6px;top:6px" width="48" height="15" viewBox="0 0 48 15"><g fill="none" stroke="#1c1c1c" stroke-width="1.7">
<path d="M4.9 3.4V12.6"/><path d="M6.800 4.200H10.800C13.600 4.200 13.600 7.900 10.800 7.900H8.600M10.800 7.900C14.200 7.900 14.200 11.900 10.800 11.900H6.800"/>
<path d="M15.4 6V12.6"/><path d="M20.100 12.600V5.400L25.200 11.300L30.200 5.400V12.600" stroke-linejoin="bevel"/><path d="M34.2 6V12.6"/><path d="M37.5 4.3H45M41 4.3V12.6"/></g>
<rect x="14.6" y="3.4" width="1.7" height="1.5" fill="#1c1c1c"/><rect x="33.3" y="3.2" width="1.9" height="1.7" fill="#f00"/></svg>
<svg class="abs" style="left:357px;top:2px" width="24" height="24" viewBox="0 0 24 24"><g stroke="#e4e4e4" fill="none" stroke-linecap="round" stroke-linejoin="round" stroke-width="2"><rect x="3" y="7" width="18" height="12.7" rx="1.2"/><path d="M9 7V3.5H15V7M3 12.3H21"/></g><rect x="10.7" y="11.5" width="2.6" height="2.6" fill="#e4e4e4"/></svg>
<svg class="abs" style="left:389px;top:2px" width="28" height="24" viewBox="0 0 28 24"><g stroke="#e4e4e4" fill="none" stroke-linecap="round" stroke-linejoin="round" stroke-width="1.9"><circle cx="14" cy="6.9" r="2.3"/><path d="M9.2 19.6L10.6 13.2C11.5 11.6 16.5 11.6 17.4 13.2L18.8 19.6Z"/></g><g fill="#e4e4e4"><circle cx="5.9" cy="10.9" r="2"/><circle cx="22.1" cy="10.9" r="2"/><path d="M2.2 19.6C2.4 16 3.5 14.3 7 14.4L7.2 19.6Z"/><path d="M25.8 19.6C25.600 16 24.500 14.3 21 14.400L20.800 19.600Z"/></g></svg>
<svg class="abs" style="left:425px;top:2px" width="26" height="24" viewBox="0 0 26 24"><g stroke="#e4e4e4" fill="none" stroke-linecap="round" stroke-linejoin="round" stroke-width="1.9"><path d="M11.600 19.6C6.500 17.500 4 14 4 9.500V6L10.500 3.400L17.200 6V10.500"/><circle cx="17.100" cy="16.700" r="4.600"/></g><circle cx="17.100" cy="15.200" r="1.300" fill="#e4e4e4"/><path d="M14.600 18.900C15.200 17.300 19 17.300 19.600 18.900Z" fill="#e4e4e4"/></svg>
<svg class="abs" style="left:631px;top:3px" width="24" height="24" viewBox="0 0 24 24"><path d="M7 9.500L12 14.500L17 9.500Z" fill="#fff"/></svg>
<svg class="abs" style="left:1105px;top:2px" width="24" height="24" viewBox="0 0 24 24"><path d="M19.43 12.98c.04-.32.07-.64.07-.98 0-.34-.03-.66-.07-.98l2.11-1.650c.19-.15.24-.42.12-.64l-2-3.460c-.09-.16-.26-.25-.44-.25-.06 0-.12.010-.17.030l-2.490 1c-.52-.4-1.080-.73-1.690-.98l-.38-2.650C14.460 2.180 14.250 2 14 2h-4c-.25 0-.46.18-.49.42l-.38 2.650c-.61.25-1.170.59-1.690.98l-2.490-1c-.06-.02-.12-.03-.18-.03-.17 0-.34.09-.43.25l-2 3.460c-.13.22-.07.49.12.64l2.110 1.650c-.04.32-.07.65-.07.980 0 .33.030.66.070.98l-2.110 1.650c-.19.15-.24.42-.12.640l2 3.460c.09.16.26.25.44.25.060 0 .12-.010.17-.030l2.490-1c.52.4 1.080.73 1.690.98l.38 2.650c.030.24.24.42.49.420h4c.25 0 .46-.18.49-.42l.38-2.650c.61-.25 1.170-.59 1.690-.98l2.490 1c.060.020.12.030.18.030.17 0 .34-.09.43-.25l2-3.460c.12-.22.070-.49-.12-.64l-2.110-1.650zm-1.980-1.710c.040.31.050.52.050.73 0 .21-.020.43-.050.73l-.14 1.130.89.700 1.080.84-.7 1.210-1.270-.51-1.040-.42-.9.680c-.43.32-.84.56-1.250.73l-1.060.43-.16 1.130-.2 1.350h-1.400l-.19-1.350-.16-1.130-1.060-.43c-.43-.18-.83-.41-1.230-.71l-.91-.7-1.060.43-1.270.51-.7-1.210 1.080-.84.89-.7-.14-1.130c-.030-.31-.050-.54-.050-.74s.020-.43.050-.73l.14-1.130-.89-.7-1.080-.84.700-1.210 1.270.51 1.040.42.900-.68c.43-.32.840-.56 1.250-.73l1.060-.43.160-1.130.2-1.350h1.390l.19 1.350.16 1.130 1.060.43c.43.180.83.410 1.230.710l.91.700 1.060-.43 1.270-.51.700 1.210-1.070.85-.89.700.14 1.130zM12 8c-2.210 0-4 1.790-4 4s1.790 4 4 4 4-1.790 4-4-1.790-4-4-4zm0 6c-1.100 0-2-.9-2-2s.9-2 2-2 2 .9 2 2-.9 2-2 2z" fill="#e4e4e4"/></svg>
<svg class="abs" style="left:1141px;top:3px" width="24" height="24" viewBox="0 0 24 24"><path d="M2.500 19C4 12.500 8 9.300 13.500 8.800V4.300L21 11.500L13.500 18.700V14.200C9 14 5.500 15.500 2.500 19Z" fill="#e4e4e4"/></svg>
<svg class="abs" style="left:1689px;top:2px" width="24" height="24" viewBox="0 0 24 24"><g stroke="#e4e4e4" fill="none" stroke-linecap="round" stroke-linejoin="round" stroke-width="2"><circle cx="10.200" cy="9.600" r="5.500"/><path d="M14.300 13.700L21 20.400"/></g></svg>
<svg class="abs" style="left:1758px;top:2px" width="24" height="24" viewBox="0 0 24 24"><g fill="#e4e4e4"><circle cx="4.500" cy="5.400" r="1.500"/><circle cx="4.500" cy="11.400" r="1.500"/><circle cx="4.500" cy="17.500" r="1.500"/><rect x="8" y="4.400" width="14" height="2"/><rect x="8" y="10.400" width="14" height="2"/><rect x="8" y="16.500" width="14" height="2"/></g></svg>
<svg class="abs" style="left:1790px;top:2px" width="26" height="24" viewBox="0 0 26 24"><g stroke="#e4e4e4" fill="none" stroke-linecap="round" stroke-linejoin="round" stroke-width="1.900"><path d="M19.600 8.500A8 8 0 1 0 18.500 17.500"/></g><path d="M17.200 12.200H23.200L20.300 16Z" fill="#e4e4e4"/><path d="M8.300 15.300V14.600L9.200 13.600V10.300C9.200 8.300 10.500 6.800 12.400 6.800C14.300 6.800 15.600 8.300 15.600 10.300V13.600L16.500 14.600V15.300Z" fill="#e4e4e4"/><path d="M11.200 16.100H13.600C13.600 17.400 11.200 17.400 11.200 16.100Z" fill="#e4e4e4"/></svg>
<svg class="abs" style="left:1826px;top:2px" width="24" height="24" viewBox="0 0 24 24"><rect x="3" y="3" width="18" height="18" rx="2" fill="#e4e4e4"/><circle cx="12" cy="9" r="3" fill="#545454"/><path d="M6 18V17C6 15 10 13.900 12 13.900C14 13.900 18 15 18 17V18Z" fill="#545454"/></svg>
<!-- LEFT SIDEBAR -->
<div class="sb" style="top:38px"><svg width="48" height="48" viewBox="0 0 48 48"><rect x="7.900" y="9.200" width="11.600" height="5.800" rx="2.900" fill="#e2e2e2"/><path d="M19 12H24.100V35.700H28.600M24.100 15.800H28.600M24.100 25.700H28.600" stroke="#e2e2e2" fill="none" stroke-linejoin="round" stroke-width="1.600" stroke-linecap="butt"/><rect x="31" y="13.700" width="9.200" height="4.300" rx="2.150" fill="#e2e2e2"/><rect x="31" y="23.600" width="9.200" height="4.300" rx="2.150" fill="#e2e2e2"/><rect x="31" y="33.500" width="9.200" height="4.300" rx="2.150" fill="#e2e2e2"/></svg></div>
<div class="sb" style="top:88px"><svg width="48" height="48" viewBox="0 0 48 48"><circle cx="19" cy="15.900" r="3.200" fill="#e2e2e2"/><circle cx="19" cy="31.100" r="3.200" fill="#e2e2e2"/><circle cx="28.600" cy="27" r="3.300" fill="#e2e2e2"/><path d="M19 15.900V31.100M19.200 17.500C19.800 23 23.500 26.300 28.600 27" stroke="#e2e2e2" fill="none" stroke-linecap="round" stroke-linejoin="round" stroke-width="2.100"/></svg></div>
<div class="sb sel" style="top:138px"><svg width="48" height="48" viewBox="0 0 48 48"><path d="M10.500 14.200C22 14.200 23 31.600 38.500 31.600M10.500 31.600C22 31.600 23 14.200 38.500 14.200M31.400 8.800C33 12 36 13.800 39.400 14.300C36 15.200 33 17 31.400 19.900M31.400 25.400C33 28.500 36 30.500 39.400 31.400C36 32.300 33 34 31.400 36.900" stroke="#e2e2e2" fill="none" stroke-linecap="round" stroke-linejoin="round" stroke-width="1.900"/></svg></div>
<div class="sb" style="top:188px"><svg width="48" height="48" viewBox="0 0 48 48"><path d="M30.300 14.600C26 14 20 14 16.200 14.700L25.400 23.200L16.200 31.900C20 32.600 26 32.600 30.600 32" stroke="#e2e2e2" fill="none" stroke-linecap="round" stroke-linejoin="round" stroke-width="2.900"/></svg></div>
<div class="sb" style="top:238px"><svg width="48" height="48" viewBox="0 0 48 48"><path d="M26.200 14.500C22 13.900 16 13.900 12.400 14.600L22.200 23.500L12.400 32.500C16 33.200 22 33.200 26.600 32.600" stroke="#e2e2e2" fill="none" stroke-linecap="round" stroke-linejoin="round" stroke-width="2.900"/><path d="M28.500 24.100H37.700M33 19.200V29" stroke="#e2e2e2" fill="none" stroke-linecap="round" stroke-linejoin="round" stroke-width="1.700"/></svg></div>
<div class="sb" style="top:288px"><svg width="48" height="48" viewBox="0 0 48 48"><path d="M12 10.200C20 9.500 28 9.600 36.200 10.700C35 16 34 24 35 36.900H12Z" stroke="#e2e2e2" fill="none" stroke-linecap="round" stroke-linejoin="round" stroke-width="1.700"/><path d="M26 34.700H33" stroke="#e2e2e2" fill="none" stroke-linejoin="round" stroke-width="2.600" stroke-linecap="butt"/><text x="15.600" y="27.100" font-family="Liberation Sans" font-size="11.800" textLength="13.600" lengthAdjust="spacingAndGlyphs" fill="#e2e2e2">2D</text></svg></div>
<div class="sb" style="top:338px"><svg width="48" height="48" viewBox="0 0 48 48"><rect x="20.100" y="9" width="8" height="9.300" rx="0.800" stroke="#e2e2e2" fill="none" stroke-linecap="round" stroke-linejoin="round" stroke-width="1.600"/><rect x="8.700" y="28.800" width="8" height="9.800" rx="0.800" stroke="#e2e2e2" fill="none" stroke-linecap="round" stroke-linejoin="round" stroke-width="1.600"/><rect x="20.100" y="28.800" width="8" height="9.800" rx="0.800" stroke="#e2e2e2" fill="none" stroke-linecap="round" stroke-linejoin="round" stroke-width="1.600"/><rect x="31.500" y="28.800" width="8" height="9.800" rx="0.800" stroke="#e2e2e2" fill="none" stroke-linecap="round" stroke-linejoin="round" stroke-width="1.600"/><path d="M24.100 18.300V28.800M12.700 28.800V24.100H35.500V28.800" stroke="#e2e2e2" fill="none" stroke-linecap="round" stroke-linejoin="round" stroke-width="1.600"/></svg></div>
<div class="sb" style="top:388px"><svg width="48" height="48" viewBox="0 0 48 48"><path d="M12.300 16.200C14.500 13 16.500 11.100 18.400 11.100C21 11.100 23 18.100 25.400 18.100C28 18.100 32 11 36.200 8.900M12 24.500C13 23 14 22.600 14.800 22.700C17.500 23 20 28.900 23.100 28.900C26 28.900 29 25.800 37.100 24.200" stroke="#e2e2e2" fill="none" stroke-linecap="round" stroke-linejoin="round" stroke-width="2"/><path d="M12.300 35.900H37.300" stroke="#e2e2e2" fill="none" stroke-linejoin="round" stroke-width="2.200" stroke-linecap="butt"/></svg></div>
<div class="sb" style="top:438px"><svg width="48" height="48" viewBox="0 0 48 48"><path d="M12.700 13.900H19C17 8.400 28.700 8.400 26.700 13.900H32.300Q34.300 13.900 34.300 15.900V19.700C39.800 17.700 39.800 31.900 34.300 29.900V34.500Q34.300 36.500 32.300 36.500H26.700C28.700 30.500 17 30.500 19 36.500H12.700Q10.700 36.500 10.700 34.500V29.200C16.500 31.200 16.500 17.700 10.700 19.700V15.900Q10.700 13.900 12.700 13.900Z" stroke="#e2e2e2" fill="none" stroke-linecap="round" stroke-linejoin="round" stroke-width="1.800"/></svg></div>
<div class="sb" style="top:488px"><svg width="48" height="48" viewBox="0 0 48 48"><circle cx="23.500" cy="16.200" r="5.700" stroke="#e2e2e2" fill="none" stroke-linecap="round" stroke-linejoin="round" stroke-width="1.800"/><path d="M22.800 33.100H11.400C11.400 27 16.500 22.700 23.500 22.700C29 22.700 33 25.500 35 29.600" stroke="#e2e2e2" fill="none" stroke-linecap="round" stroke-linejoin="round" stroke-width="1.800"/><path d="M28.800 32.800L32.900 38.300L40.900 29.600" stroke="#e2e2e2" fill="none" stroke-linecap="round" stroke-linejoin="round" stroke-width="3"/></svg></div>
<div class="sb" style="top:538px"><svg width="48" height="48" viewBox="0 0 48 48"><path d="M35 34.300H13.300C10.500 26 8.500 18 8.500 13.900L18.400 13.500L21.600 17.800H29.900Q32.400 17.800 32.400 21.600L35 34.300L39.400 27.600C39.700 26.300 39 25.800 38 25.800H33" stroke="#e2e2e2" fill="none" stroke-linecap="round" stroke-linejoin="round" stroke-width="1.700"/><path d="M36.200 26.700H20.900M25.400 22.200L20.900 26.700L25.400 31.100" stroke="#e2e2e2" fill="none" stroke-linecap="round" stroke-linejoin="round" stroke-width="1.800"/></svg></div>
<div class="sb" style="top:588px"><svg width="48" height="48" viewBox="0 0 48 48"><circle cx="18.400" cy="16.200" r="5.500" stroke="#e2e2e2" fill="none" stroke-linecap="round" stroke-linejoin="round" stroke-width="1.700"/><path d="M26.700 29.900H8.800C8.800 25 13 21.900 18.400 21.900C21.500 21.900 24 22.900 25.600 24.600" stroke="#e2e2e2" fill="none" stroke-linecap="round" stroke-linejoin="round" stroke-width="1.700"/><path d="M32.700 37.200C28.500 33.500 26.900 31 26.900 28.300C26.900 25.100 29.500 22.600 32.700 22.600C35.900 22.600 38.500 25.100 38.500 28.300C38.500 31 36.900 33.500 32.700 37.200Z" fill="#545454" stroke="#e2e2e2" stroke-width="1.700" stroke-linejoin="round"/><circle cx="32.700" cy="28.200" r="1.600" fill="#e2e2e2"/></svg></div>
<div class="sb" style="top:638px"><svg width="48" height="48" viewBox="0 0 48 48"><circle cx="24.100" cy="22" r="13.100" stroke="#e2e2e2" fill="none" stroke-linecap="round" stroke-linejoin="round" stroke-width="2"/><path d="M24.100 35.500V38" stroke="#e2e2e2" fill="none" stroke-linejoin="round" stroke-width="2.400" stroke-linecap="butt"/><path d="M9.200 39H39" stroke="#e2e2e2" fill="none" stroke-linejoin="round" stroke-width="2.200" stroke-linecap="butt"/><path d="M21.600 26.500L25.700 14.500L25.900 27.500C25 29 22 28.500 21.600 26.500Z" fill="#e2e2e2"/><path d="M14.600 22C15 16 19.500 12.200 24.100 12.200C28.700 12.200 33 16 33.500 21.600" stroke="#e2e2e2" stroke-width="1" stroke-dasharray="1.200 2.200" fill="none"/></svg></div>
<div class="abs" style="left:16.900px;top:778.900px;width:24.200px;height:24.200px;border-radius:12.100px;background:#545454"></div><svg class="abs" style="left:17px;top:779px" width="24" height="24" viewBox="0 0 24 24"><text x="12.100" y="18" text-anchor="middle" font-family="Liberation Sans" font-weight="700" font-size="16.500" textLength="8.600" lengthAdjust="spacingAndGlyphs" fill="#fff">?</text></svg>
<!-- LEFT PANEL -->
<div id="lpanel" class="abs"></div>
<svg class="abs" style="left:72px;top:58.2px" width="18" height="16" viewBox="0 0 18 16"><g fill="#e4e4e4"><rect x="0.600" y="0.800" width="12.400" height="2"/><rect x="0.600" y="4.700" width="12.400" height="2"/><rect x="0.600" y="8.600" width="8.400" height="2"/><path d="M11.400 8.600V14.600L16.400 11.600Z"/></g></svg>
<div class="abs" style="left:324px;top:81.800px;width:107px;height:2px;background:#eee"></div>
<svg class="abs" style="left:621px;top:54px" width="24" height="24" viewBox="0 0 24 24"><path d="M5.800 5.800L18.200 18.200M18.200 5.800L5.800 18.200" stroke="#e4e4e4" stroke-width="1.900" fill="none"/></svg>
<div class="abs" style="left:655.200px;top:445px;width:1.800px;height:27px;background:#3a9ec2"></div>
<div id="sect" class="abs"></div>
<div id="tree" class="abs"></div>
<svg class="abs" style="left:622px;top:93px" width="24" height="24" viewBox="0 0 24 24"><path d="M7.500 10L12.500 15L17.500 10Z" fill="#e4e4e4"/></svg>
<svg class="abs" style="left:74px;top:131px" width="11" height="14" viewBox="0 0 11 14"><path d="M2.500 4.700L5.300 2L8.100 4.700M2.500 9.300L5.300 12L8.100 9.300" stroke="#3a95b8" stroke-width="1.400" fill="none"/></svg>
<svg class="abs" style="left:623px;top:133px" width="17" height="11" viewBox="0 0 17 11"><path d="M1 5.500L4.200 8.700L12.800 1.200M5.800 7L7.200 8.700L15.800 1.200" stroke="#3a95b8" stroke-width="1.100" fill="none"/></svg>
<svg class="abs" style="left:77px;top:157px" width="8" height="6" viewBox="0 0 8 6"><path d="M0.800 1.800H7.200L4 5Z" fill="#7a7a7a"/></svg>
<svg class="abs" style="left:631px;top:154px" width="12" height="12" viewBox="0 0 12 12"><rect width="12" height="12" rx="1.500" fill="#3a8fad"/><rect x="2.800" y="5.200" width="6.400" height="1.600" fill="#e8f2f6"/></svg>
<div class="abs" style="left:631px;top:178px;width:12px;height:12px;border:1.400px solid #756c6c;border-radius:1.500px;background:#fff"></div>
<svg class="abs" style="left:631px;top:202px" width="12" height="12" viewBox="0 0 12 12"><rect width="12" height="12" rx="1.500" fill="#3a8fad"/><path d="M2.400 6.100L4.800 8.500L9.600 3.400" stroke="#fff" stroke-width="1.500" fill="none"/></svg>
<svg class="abs" style="left:631px;top:226px" width="12" height="12" viewBox="0 0 12 12"><rect width="12" height="12" rx="1.500" fill="#3a8fad"/><path d="M2.400 6.100L4.800 8.500L9.600 3.400" stroke="#fff" stroke-width="1.500" fill="none"/></svg>
<div class="abs" style="left:631px;top:250px;width:12px;height:12px;border:1.400px solid #756c6c;border-radius:1.500px;background:#fff"></div>
<div class="abs" style="left:631px;top:274px;width:12px;height:12px;border:1.400px solid #756c6c;border-radius:1.500px;background:#fff"></div>
<!-- BOTTOM PANEL -->
<div id="bpanel" class="abs"></div>
<div id="bhead" class="abs"></div>
<div id="thead" class="abs"></div>
<div class="abs" style="left:670px;top:494px;width:64px;height:31px;background:#ffa3a3"></div>
<div class="abs" style="left:670px;top:526px;width:64px;height:32px;background:#ffa3a3"></div>
<div class="abs" style="left:670px;top:525px;width:1143px;height:1px;background:#dcdcdc"></div>
<div class="abs" style="left:670px;top:525px;width:64px;height:1px;background:#e09494"></div>
<div class="abs" style="left:1061px;top:462px;width:1px;height:32px;background:#505050"></div>
<div class="abs" style="left:1061px;top:494px;width:1px;height:64px;background:#484848"></div>
<div class="abs" style="left:1257px;top:462px;width:1px;height:32px;background:#505050"></div>
<div class="abs" style="left:1257px;top:494px;width:1px;height:64px;background:#484848"></div>
<div class="abs" style="left:1534px;top:462px;width:1px;height:32px;background:#505050"></div>
<div class="abs" style="left:1534px;top:494px;width:1px;height:64px;background:#484848"></div>
<div class="abs" style="left:1812px;top:462px;width:1px;height:32px;background:#505050"></div>
<div class="abs" style="left:1812px;top:494px;width:1px;height:64px;background:#484848"></div>
<div class="abs" style="left:734px;top:494px;width:1px;height:64px;background:#4a4040"></div>
<div class="abs" style="left:691px;top:470.500px;width:15px;height:15px;border:2px solid #737373;border-radius:3px;background:#fff"></div>
<div class="abs" style="left:691px;top:503px;width:15px;height:15px;border:2.100px solid #6e4949;border-radius:3px"></div>
<div class="abs" style="left:691px;top:535px;width:15px;height:15px;border:2.100px solid #6e4949;border-radius:3px"></div>
<svg class="abs" style="left:759px;top:508px" width="12" height="6" viewBox="0 0 12 6"><path d="M1 5.200L6 0.400L11 5.200Z" fill="#8a8a8a"/></svg>
<svg class="abs" style="left:759px;top:540px" width="12" height="6" viewBox="0 0 12 6"><path d="M1 5.200L6 0.400L11 5.200Z" fill="#8a8a8a"/></svg>
<svg class="abs" style="left:677.500px;top:439.500px" width="18" height="16" viewBox="0 0 18 16"><g fill="#e4e4e4"><rect x="0.600" y="0.800" width="12.400" height="2"/><rect x="0.600" y="4.700" width="12.400" height="2"/><rect x="0.600" y="8.600" width="8.400" height="2"/><path d="M11.400 8.600V14.600L16.400 11.600Z"/></g></svg>
<div class="abs" style="left:1244px;top:431px;width:42px;height:2px;background:#3a9ec2"></div>
<svg class="abs" style="left:1727px;top:436px" width="18" height="20" viewBox="0 0 18 20"><g fill="#e4e4e4"><rect x="2" y="1.900" width="14" height="1.900"/><rect x="2" y="17" width="14" height="1.900"/><rect x="8.200" y="7" width="1.600" height="7"/><path d="M9 4.800L12 8H6Z"/><path d="M9 16L12 12.800H6Z"/></g></svg>
<svg class="abs" style="left:1757px;top:436px" width="18" height="20" viewBox="0 0 18 20"><g fill="#e4e4e4"><rect x="2" y="8.700" width="14" height="1.300"/><rect x="2" y="10.700" width="14" height="1.300"/><rect x="8.300" y="1" width="1.400" height="4"/><path d="M9 7.300L11.600 4.300H6.400Z"/><rect x="8.300" y="15.500" width="1.400" height="4"/><path d="M9 13.300L11.600 16.300H6.400Z"/></g></svg>
<svg class="abs" style="left:1784.800px;top:435px" width="22" height="22" viewBox="0 0 24 24"><path d="M19.14,12.940c0.040-0.300,0.060-0.610,0.060-0.940c0-0.320-0.020-0.640-0.070-0.940l2.030-1.580c0.180-0.140,0.230-0.410,0.120-0.610 l-1.920-3.320c-0.120-0.220-0.370-0.290-0.590-0.220l-2.390,0.960c-0.500-0.380-1.030-0.700-1.620-0.940L14.400,2.810c-0.040-0.240-0.240-0.410-0.480-0.410 h-3.840c-0.240,0-0.430,0.170-0.470,0.410L9.250,5.350C8.660,5.590,8.120,5.920,7.630,6.290L5.240,5.330c-0.220-0.080-0.470,0-0.590,0.220L2.740,8.870 C2.620,9.080,2.660,9.340,2.860,9.480l2.030,1.580C4.840,11.360,4.800,11.690,4.800,12s0.020,0.640,0.070,0.940l-2.030,1.580 c-0.180,0.140-0.230,0.410-0.120,0.610l1.920,3.320c0.120,0.220,0.370,0.290,0.590,0.220l2.390-0.960c0.500,0.380,1.030,0.700,1.620,0.940l0.360,2.540 c0.050,0.240,0.240,0.410,0.480,0.410h3.840c0.240,0,0.440-0.170,0.470-0.410l0.360-2.540c0.590-0.240,1.130-0.560,1.620-0.940l2.390,0.960 c0.220,0.080,0.470,0,0.590-0.220l1.920-3.320c0.120-0.220,0.070-0.470-0.120-0.610L19.140,12.940z M12,15.600c-1.980,0-3.600-1.620-3.600-3.600 s1.620-3.600,3.600-3.600s3.600,1.620,3.600,3.600S13.980,15.600,12,15.600z" fill="#e4e4e4"/></svg>
<!-- RIGHT BAR -->
<div id="rbar" class="abs"></div>
<svg class="abs" style="left:1826px;top:38px" width="36" height="772" viewBox="1826 38 36 772">
<rect x="1826" y="130" width="36" height="1.300" fill="#3b3838"/>
<rect x="1826" y="399" width="36" height="1.300" fill="#3b3838"/>
<rect x="1826" y="448" width="36" height="1.300" fill="#3b3838"/>
<rect x="1826" y="629" width="36" height="1.300" fill="#3b3838"/>
<rect x="1826" y="722" width="36" height="1.300" fill="#3b3838"/>
<path d="M1839.500 67C1834.500 67.500 1832.300 64 1832.800 61.500C1833.300 58.500 1836 57.300 1838 57.700C1838.500 53.500 1841.500 51.500 1844.500 51.500C1847.500 51.500 1850.300 53.500 1850.800 57.500C1853.500 57.300 1855.800 59.300 1855.900 62C1856 65 1853.500 67.300 1849.300 67" stroke="#e4e4e4" fill="none" stroke-linecap="round" stroke-linejoin="round" stroke-width="1.600"/><path d="M1844.300 56.500V72.500M1844.300 64.500L1839.800 60.500M1844.300 67L1848.800 63" stroke="#e4e4e4" fill="none" stroke-linecap="round" stroke-linejoin="round" stroke-width="1.500"/>
<path d="M1842.300 110.800H1831.500V93.500H1854.700V101.500M1836.500 113.400H1839.500V110.800" stroke="#e4e4e4" fill="none" stroke-width="1.300"/>
<path d="M1841.500 106V102.800H1845M1853 102.800H1856.500V106M1856.500 115V118.400H1853M1845 118.400H1841.500V115" stroke="#e4e4e4" fill="none" stroke-width="1.300"/>
<path d="M1849 105.800L1853.200 108.200V113.200L1849 115.600L1844.800 113.200V108.200Z" fill="#e4e4e4"/>
<rect x="1831.600" y="150.200" width="25" height="8.600" stroke="#e4e4e4" fill="none" stroke-width="1.300"/><rect x="1831" y="160.300" width="26.200" height="1.900" fill="#e4e4e4"/>
<rect x="1834.4" y="153.8" width="1.300" height="4.5" fill="#e4e4e4"/>
<rect x="1837.6000000000001" y="155.70000000000002" width="1.300" height="2.6" fill="#e4e4e4"/>
<rect x="1840.8000000000002" y="153.8" width="1.300" height="4.5" fill="#e4e4e4"/>
<rect x="1844.0" y="155.70000000000002" width="1.300" height="2.6" fill="#e4e4e4"/>
<rect x="1847.2" y="153.8" width="1.300" height="4.5" fill="#e4e4e4"/>
<rect x="1850.4" y="155.70000000000002" width="1.300" height="2.6" fill="#e4e4e4"/>
<rect x="1853.6000000000001" y="153.8" width="1.300" height="4.5" fill="#e4e4e4"/>
<path d="M1848.800 185.400V205.400L1839.200 213.100V193.700Z" fill="#dcdcdc"/><path d="M1830.800 201.400L1839.600 195.300H1856.800L1848 201.400Z" stroke="#e4e4e4" fill="none" stroke-width="1.200"/>
<path d="M1832.400 237.300H1849.300V253.300H1832.400ZM1839 232.400H1856.100V248.400H1839ZM1832.400 237.300L1839 232.400M1849.300 237.300L1856.100 232.400M1832.400 253.300L1839 248.400M1849.300 253.300L1856.100 248.400" stroke="#e4e4e4" fill="none" stroke-width="1.100"/><path d="M1841 253.300V237.300L1846.300 233V248.800Z" fill="#dcdcdc"/>
<path d="M1834 276.600H1856.200V296.600H1831V279.600Z" stroke="#e4e4e4" fill="none" stroke-width="1.200"/><path d="M1856.200 277.500H1857.600V298.200H1832.500V296.600" stroke="#e4e4e4" fill="none" stroke-width="1.200"/><path d="M1831 279.600H1834V276.600Z" fill="#e4e4e4"/><path d="M1842.500 277V296.500M1831.500 285.800H1856" stroke="#e4e4e4" fill="none" stroke-width="1.200" stroke-dasharray="3 1.500"/><rect x="1849" y="292.600" width="7" height="3.600" fill="#e4e4e4"/>
<circle cx="1843.900" cy="331" r="7.700" stroke="#e4e4e4" fill="none" stroke-width="2.100"/><circle cx="1843.900" cy="331" r="4" fill="#e4e4e4"/><path d="M1843.900 320.200V323M1843.900 339V341.800M1833.100 331H1836M1851.800 331H1854.700" stroke="#e4e4e4" fill="none" stroke-width="2"/>
<circle cx="1843.900" cy="374.900" r="12.600" stroke="#e4e4e4" fill="none" stroke-width="1"/><path d="M1838.500 382V369C1841 367.700 1843.500 368.200 1845.500 369.200C1847.500 370.200 1849.500 370.200 1851.800 369.500V377.500C1849.500 378.300 1847.500 378.200 1845.500 377.300C1843.500 376.400 1841 376.200 1838.500 377.200" stroke="#e4e4e4" fill="none" stroke-linecap="round" stroke-linejoin="round" stroke-width="1.100"/>
<path d="M1829.200 428.100L1859.200 410.900M1829.600 437.900L1859 421.300M1830.400 422.600L1848.800 433.200M1839 416.400L1857.700 426.900" stroke="#e4e4e4" fill="none" stroke-width="1.100"/><text x="1829.400" y="420.300" font-family="Liberation Sans" font-size="6" font-weight="700" fill="#e4e4e4">1</text><text x="1839.400" y="414" font-family="Liberation Sans" font-size="6" font-weight="700" fill="#e4e4e4">2</text>
<rect x="1832.800" y="461.7" width="23" height="23.100000000000023" stroke="#e4e4e4" fill="none" stroke-width="1.200" stroke-dasharray="2 2.200"/>
<path d="M1843.900 466.600L1849.500 469.800V476.200L1843.900 479.400L1838.300 476.200V469.800ZM1838.300 469.800L1843.900 473L1849.500 469.800M1843.900 473V479.400" stroke="#e4e4e4" fill="none" stroke-linecap="round" stroke-linejoin="round" stroke-width="1.100"/>
<rect x="1832.800" y="505.6" width="23" height="23.0" stroke="#e4e4e4" fill="none" stroke-width="1.200" stroke-dasharray="2 2.200"/>
<path d="M1836.600 517C1839.500 510.7 1848.700 510.7 1851.600 517C1848.700 523.3 1839.500 523.3 1836.600 517Z" fill="#e4e4e4"/><circle cx="1844.100" cy="517" r="3.200" fill="#545454"/><circle cx="1844.100" cy="517" r="1.700" fill="#e4e4e4"/>
<rect x="1832.800" y="549.7" width="23" height="23.0" stroke="#e4e4e4" fill="none" stroke-width="1.200" stroke-dasharray="2 2.200"/>
<path d="M1836.600 561.1C1839.500 554.8000000000001 1848.700 554.8000000000001 1851.600 561.1C1848.700 567.4 1839.500 567.4 1836.600 561.1Z" fill="#e4e4e4"/><circle cx="1844.100" cy="561.1" r="3.200" fill="#545454"/><circle cx="1844.100" cy="561.1" r="1.700" fill="#e4e4e4"/>
<path d="M1837 554.500L1850 567.500" stroke="#545454" stroke-width="2.600"/><path d="M1837.500 554L1850.500 567" stroke="#e4e4e4" stroke-width="1.100"/>
<rect x="1832.800" y="593.3" width="23" height="23.5" stroke="#e4e4e4" fill="none" stroke-width="1.200" stroke-dasharray="2 2.200"/>
<rect x="1842" y="603" width="16" height="16" fill="#e4e4e4"/><path d="M1846 607L1854 615M1854 607L1846 615" stroke="#444" stroke-width="1.200"/>
<rect x="1828" y="638" width="32" height="32" fill="#8c8c8c"/>
<path d="M1832.300 645.500L1843.800 642.800L1855.200 645.500L1843.800 650.800Z" fill="#7c7c7c" stroke="#e4e4e4" stroke-width="1" stroke-linejoin="round"/><path d="M1832.300 645.500L1843.800 650.800V666L1834 657.500Z" fill="#dedede" stroke="#e4e4e4" stroke-width="1" stroke-linejoin="round"/><path d="M1843.800 650.800L1855.200 645.500L1853.500 657.500L1843.800 666Z" fill="#8c8c8c" stroke="#e4e4e4" stroke-width="1.200" stroke-linejoin="round"/>
<rect x="1828" y="682" width="32" height="32" fill="#8c8c8c"/>
<ellipse cx="1844" cy="698" rx="11.400" ry="5.200" stroke="#e4e4e4" fill="none" stroke-width="1.800"/><ellipse cx="1844" cy="698" rx="5.400" ry="10.400" stroke="#e4e4e4" fill="none" stroke-width="1.800"/><path d="M1844 694V698.500L1841 701.500M1844 698.500L1847 701.500" stroke="#e4e4e4" fill="none" stroke-linecap="round" stroke-linejoin="round" stroke-width="0.900"/>
<path d="M1828.300 803V808.300H1833.300Z" fill="#f0f0f0"/>
</svg>
<!-- TEXTS -->
<div class="t" id="t_space" style="left:463.3px;top:10.12px;font-size:12.2px;font-weight:400;color:#fff;letter-spacing:0.632px">Базовое пространство</div>
<div class="t" id="t_school" style="left:1026.9px;top:4.36px;font-size:18px;font-weight:400;color:#dedede;letter-spacing:0.460px">Школа.</div>
<div class="t" id="t_tab1" style="left:119.4px;top:59.35px;font-size:14px;font-weight:400;color:#9e9e9e;letter-spacing:1.500px">Настройки</div>
<div class="t" id="t_tab2" style="left:233.9px;top:59.35px;font-size:14px;font-weight:400;color:#9e9e9e;letter-spacing:1.529px">Коллизии</div>
<div class="t" id="t_tab3" style="left:340.3px;top:59.35px;font-size:14px;font-weight:400;color:#e6e6e6;letter-spacing:1.629px">Проверки</div>
<div class="t" id="t_sect" style="left:78.2px;top:97.80px;font-size:13.7px;font-weight:700;color:#e2e2e2;letter-spacing:-0.433px">Дерево правил</div>
<div class="t" id="t_coll" style="left:96.4px;top:134.67px;font-size:8.9px;font-weight:400;color:#3a95b8;letter-spacing:1.493px">Свернуть дерево</div>
<div class="t" id="t_selall" style="left:538.8px;top:134.67px;font-size:8.9px;font-weight:400;color:#3a95b8;letter-spacing:1.600px">Выделить всё</div>
<div class="t" id="t_grp" style="left:95.6px;top:152.59px;font-size:12.3px;font-weight:700;color:#1a1a1a;letter-spacing:-0.686px">Группа проверок</div>
<div class="t" id="t_c1" style="left:93.4px;top:176.73px;font-size:12.6px;font-weight:400;color:#262626;letter-spacing:-0.427px">Соответствие IDS</div>
<div class="t" id="t_c2" style="left:93.4px;top:200.73px;font-size:12.6px;font-weight:400;color:#262626;letter-spacing:-0.212px">контроль атрибутов</div>
<div class="t" id="t_c3" style="left:93.4px;top:224.73px;font-size:12.6px;font-weight:400;color:#262626;letter-spacing:-0.738px">IFC-схема</div>
<div class="t" id="t_c4" style="left:93.4px;top:248.73px;font-size:12.6px;font-weight:400;color:#262626;letter-spacing:-0.389px">Проверка по формуле</div>
<div class="t" id="t_c5" style="left:93.4px;top:272.73px;font-size:12.6px;font-weight:400;color:#262626;letter-spacing:-0.164px">Соотносимость координат</div>
<div class="t" id="t_bh" style="left:702.6px;top:439.60px;font-size:13.7px;font-weight:400;color:#e0e0e0;letter-spacing:0.295px">Атрибутивная проверка</div>
<div class="t" id="t_h1" style="left:751.2px;top:471.90px;font-size:11.7px;font-weight:700;color:#e2e2e2;letter-spacing:-0.433px">Правило</div>
<div class="t" id="t_h2" style="left:1077.9px;top:471.90px;font-size:11.7px;font-weight:700;color:#e2e2e2;letter-spacing:-0.280px">Статус</div>
<div class="t" id="t_h3" style="left:1274.1px;top:471.90px;font-size:11.7px;font-weight:700;color:#e2e2e2;letter-spacing:-0.127px">Всего элементов / Пройденных элементов</div>
<div class="t" id="t_h4" style="left:1550.9px;top:471.90px;font-size:11.7px;font-weight:700;color:#e2e2e2;letter-spacing:-0.149px">Всего проверок / Пройденных проверок</div>
<div class="t" id="t_r1" style="left:779.4px;top:502.86px;font-size:12.8px;font-weight:700;color:#1c1c1c;letter-spacing:0.212px">Правило: контроль атрибутов</div>
<div class="t" id="t_r2" style="left:779.4px;top:535.76px;font-size:12.8px;font-weight:700;color:#1c1c1c;letter-spacing:0.229px">Правило: IFC-схема</div>
<div class="t" id="t_s1" style="left:1078.7px;top:502.66px;font-size:13.4px;font-weight:400;color:#2a2a2a;letter-spacing:0.368px">Проверка не пройдена</div>
<div class="t" id="t_s2" style="left:1078.7px;top:535.66px;font-size:13.4px;font-weight:400;color:#2a2a2a;letter-spacing:0.368px">Проверка не пройдена</div>
<div class="t" id="t_e1" style="left:1273.2px;top:502.66px;font-size:13.4px;font-weight:400;color:#2a2a2a;letter-spacing:0.729px">1793/793</div>
<div class="t" id="t_e2" style="left:1274.2px;top:535.66px;font-size:13.4px;font-weight:400;color:#2a2a2a;letter-spacing:1.050px">4/0</div>
<div class="t" id="t_p1" style="left:1550.0px;top:502.66px;font-size:13.4px;font-weight:400;color:#2a2a2a;letter-spacing:0.771px">1793/793</div>
<div class="t" id="t_p2" style="left:1551.0px;top:535.66px;font-size:13.4px;font-weight:400;color:#2a2a2a;letter-spacing:1.050px">4/0</div>
<div class="t" style="left:603px;width:20.200px;text-align:right;top:153.54px;font-size:12px;color:#4171f0">5</div>
<div class="t" style="left:603px;width:20.200px;text-align:right;top:177.54px;font-size:12px;color:#4171f0">0</div>
<div class="t" style="left:603px;width:20.200px;text-align:right;top:201.54px;font-size:12px;color:#4171f0">1</div>
<div class="t" style="left:603px;width:20.200px;text-align:right;top:225.54px;font-size:12px;color:#4171f0">4</div>
<div class="t" style="left:603px;width:20.200px;text-align:right;top:249.54px;font-size:12px;color:#4171f0">0</div>
<div class="t" style="left:603px;width:20.200px;text-align:right;top:273.54px;font-size:12px;color:#4171f0">0</div>
<!-- OVERLAY -->
<svg class="abs" style="left:0;top:0" width="1864" height="817" viewBox="0 0 1864 817">
<defs><filter id="sh" x="-20%" y="-20%" width="150%" height="150%"><feGaussianBlur stdDeviation="2"/></filter></defs>
<polygon points="688.5,583.3 748.8,523.5 750.8,528.5 756.4,512.9 740.9,518.6 745.8,520.6 686.7,581.5" fill="#000" opacity="0.45" filter="url(#sh)" transform="translate(5.5,4.5)"/>
<polygon points="704.4,606.1 750.8,557.6 753.2,562.6 758.1,546.7 742.6,552.7 747.8,554.7 702.6,604.3" fill="#000" opacity="0.45" filter="url(#sh)" transform="translate(5.5,4.5)"/>
<polygon points="1719.1,565.4 1756.8,472.3 1760.9,476.2 1759.7,459.6 1747.4,470.9 1753.1,470.9 1716.9,564.6" fill="#000" opacity="0.45" filter="url(#sh)" transform="translate(5.5,4.5)"/>
<polygon points="688.5,583.3 748.8,523.5 750.8,528.5 756.4,512.9 740.9,518.6 745.8,520.6 686.7,581.5" fill="#c00000"/>
<polygon points="704.4,606.1 750.8,557.6 753.2,562.6 758.1,546.7 742.6,552.7 747.8,554.7 702.6,604.3" fill="#c00000"/>
<polygon points="1719.1,565.4 1756.8,472.3 1760.9,476.2 1759.7,459.6 1747.4,470.9 1753.1,470.9 1716.9,564.6" fill="#c00000"/>
</svg>
</body>
</html>
